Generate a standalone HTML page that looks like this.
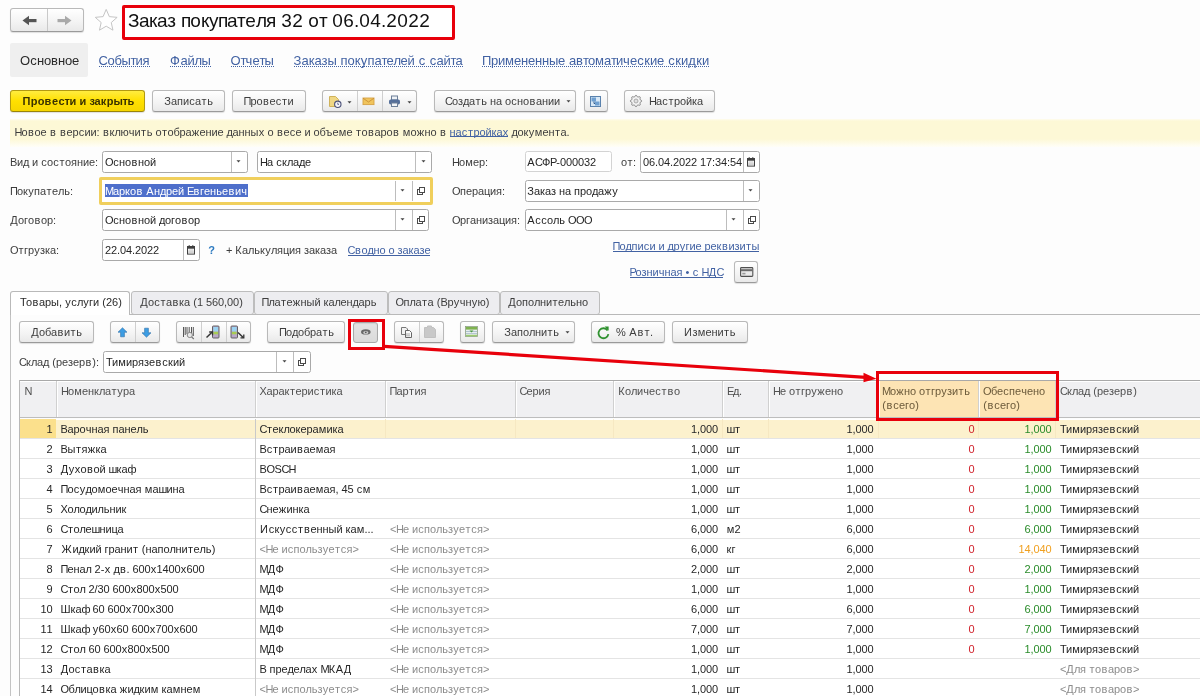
<!DOCTYPE html><html><head><meta charset="utf-8"><style>
*{margin:0;padding:0;box-sizing:border-box}
html,body{width:1200px;height:696px;overflow:hidden;background:#fdfdfd;font-family:'Liberation Sans',sans-serif}
.t{position:absolute;white-space:nowrap;line-height:1;font-kerning:none}
.t i{font-style:normal;display:inline-block;text-align:center}
.btn{position:absolute;border:1px solid #b9b9b9;border-bottom-color:#9a9a9a;border-radius:3px;background:linear-gradient(#ffffff,#f3f3f3 60%,#e9e9e9);box-shadow:0 1px 1px rgba(0,0,0,.12)}
.fld{position:absolute;border:1px solid #a9a9a9;border-radius:2.5px;background:#fff}
.vl{position:absolute;width:1px;background:#b5b5b5}
.hl{position:absolute;height:1px}
a{color:inherit}
#w{position:absolute;left:0;top:0;width:1200px;height:696px;will-change:transform}
</style></head><body><div id="w"><div class="btn" style="left:10px;top:8px;width:74px;height:24px;"></div>
<div class="vl" style="left:47px;top:9px;height:22px;background:#c9c9c9"></div>
<svg style="position:absolute;left:20px;top:14px;" width="20" height="14" viewBox="0 0 20 14"><path d="M2.5 6.5 L9 1.8 V11.2 Z" fill="#555"/><rect x="8" y="5" width="8.5" height="3.2" fill="#555"/></svg>
<svg style="position:absolute;left:56px;top:14px;" width="20" height="14" viewBox="0 0 20 14"><path d="M15.5 6.5 L9 1.8 V11.2 Z" fill="#a9a9a9"/><rect x="1.5" y="5" width="8.5" height="3.2" fill="#a9a9a9"/></svg>
<svg style="position:absolute;left:94px;top:8px;" width="25" height="25" viewBox="0 0 25 25"><polygon points="12.20,1.40 15.32,8.61 23.14,9.35 17.24,14.54 18.96,22.20 12.20,18.20 5.44,22.20 7.16,14.54 1.26,9.35 9.08,8.61" fill="#fff" stroke="#c4c4c4" stroke-width="1"/></svg>
<div class="" style="left:122px;top:5px;width:333px;height:35px;position:absolute;border:3px solid #e8000b;border-radius:2px;background:#fff"></div>
<div class="t" style="left:128px;top:11px;font-size:19px;color:#111;"><i style="width:11px">З</i><i style="width:10px">а</i><i style="width:8px">к</i><i style="width:10px">а</i><i style="width:9px">з</i><i style="width:5px">&nbsp;</i><i style="width:9px">п</i><i style="width:11px">о</i><i style="width:8px">к</i><i style="width:9px">у</i><i style="width:9px">п</i><i style="width:10px">а</i><i style="width:8px">т</i><i style="width:11px">е</i><i style="width:10px">л</i><i style="width:10px">я</i><i style="width:5px">&nbsp;</i><i style="width:11px">3</i><i style="width:11px">2</i><i style="width:5px">&nbsp;</i><i style="width:11px">о</i><i style="width:8px">т</i><i style="width:5px">&nbsp;</i><i style="width:11px">0</i><i style="width:11px">6</i><i style="width:5px">.</i><i style="width:11px">0</i><i style="width:11px">4</i><i style="width:5px">.</i><i style="width:11px">2</i><i style="width:11px">0</i><i style="width:11px">2</i><i style="width:11px">2</i></div>
<div class="" style="left:10px;top:43px;width:78px;height:34px;position:absolute;background:#efefef;border-radius:2px"></div>
<div class="t" style="left:20px;top:54px;font-size:13px;color:#2a2a2a;"><i style="width:10px">О</i><i style="width:7px">с</i><i style="width:7px">н</i><i style="width:7px">о</i><i style="width:7px">в</i><i style="width:7px">н</i><i style="width:7px">о</i><i style="width:7px">е</i></div>
<div class="t" style="left:98.5px;top:54px;font-size:13px;color:#4262a3;"><i style="width:9px">С</i><i style="width:7px">о</i><i style="width:7px">б</i><i style="width:9px">ы</i><i style="width:5px">т</i><i style="width:7px">и</i><i style="width:7px">я</i></div>
<div class="hl" style="left:98.5px;top:66px;width:51px;border-top:1px dotted #4262a3"></div>
<div class="t" style="left:169.5px;top:54px;font-size:13px;color:#4262a3;"><i style="width:11px">Ф</i><i style="width:7px">а</i><i style="width:7px">й</i><i style="width:7px">л</i><i style="width:9px">ы</i></div>
<div class="hl" style="left:169.5px;top:66px;width:41px;border-top:1px dotted #4262a3"></div>
<div class="t" style="left:230.5px;top:54px;font-size:13px;color:#4262a3;"><i style="width:10px">О</i><i style="width:5px">т</i><i style="width:7px">ч</i><i style="width:7px">е</i><i style="width:5px">т</i><i style="width:9px">ы</i></div>
<div class="hl" style="left:230.5px;top:66px;width:43px;border-top:1px dotted #4262a3"></div>
<div class="t" style="left:293.5px;top:54px;font-size:13px;color:#4262a3;"><i style="width:8px">З</i><i style="width:7px">а</i><i style="width:6px">к</i><i style="width:7px">а</i><i style="width:6px">з</i><i style="width:9px">ы</i><i style="width:4px">&nbsp;</i><i style="width:7px">п</i><i style="width:7px">о</i><i style="width:6px">к</i><i style="width:7px">у</i><i style="width:7px">п</i><i style="width:7px">а</i><i style="width:5px">т</i><i style="width:7px">е</i><i style="width:7px">л</i><i style="width:7px">е</i><i style="width:7px">й</i><i style="width:4px">&nbsp;</i><i style="width:7px">с</i><i style="width:4px">&nbsp;</i><i style="width:7px">с</i><i style="width:7px">а</i><i style="width:7px">й</i><i style="width:5px">т</i><i style="width:7px">а</i></div>
<div class="hl" style="left:293.5px;top:66px;width:169px;border-top:1px dotted #4262a3"></div>
<div class="t" style="left:482px;top:54px;font-size:13px;color:#4262a3;"><i style="width:9px">П</i><i style="width:7px">р</i><i style="width:7px">и</i><i style="width:9px">м</i><i style="width:7px">е</i><i style="width:7px">н</i><i style="width:7px">е</i><i style="width:7px">н</i><i style="width:7px">н</i><i style="width:9px">ы</i><i style="width:7px">е</i><i style="width:4px">&nbsp;</i><i style="width:7px">а</i><i style="width:7px">в</i><i style="width:5px">т</i><i style="width:7px">о</i><i style="width:9px">м</i><i style="width:7px">а</i><i style="width:5px">т</i><i style="width:7px">и</i><i style="width:7px">ч</i><i style="width:7px">е</i><i style="width:7px">с</i><i style="width:6px">к</i><i style="width:7px">и</i><i style="width:7px">е</i><i style="width:4px">&nbsp;</i><i style="width:7px">с</i><i style="width:6px">к</i><i style="width:7px">и</i><i style="width:8px">д</i><i style="width:6px">к</i><i style="width:7px">и</i></div>
<div class="hl" style="left:482px;top:66px;width:227px;border-top:1px dotted #4262a3"></div>
<div class="btn" style="left:10px;top:90px;width:135px;height:22px;background:linear-gradient(#ffec40,#ffe000 50%,#f6d600);border-color:#b39a10;border-bottom-color:#9a8408"></div>
<div class="t" style="left:22.5px;top:96px;font-size:11px;color:#3a3200;font-weight:bold"><i style="width:8px">П</i><i style="width:7px">р</i><i style="width:7px">о</i><i style="width:7px">в</i><i style="width:7px">е</i><i style="width:6px">с</i><i style="width:5px">т</i><i style="width:7px">и</i><i style="width:3px">&nbsp;</i><i style="width:7px">и</i><i style="width:3px">&nbsp;</i><i style="width:5px">з</i><i style="width:6px">а</i><i style="width:6px">к</i><i style="width:7px">р</i><i style="width:9px">ы</i><i style="width:5px">т</i><i style="width:6px">ь</i></div>
<div class="btn" style="left:152px;top:90px;width:73px;height:22px;"></div>
<div class="t" style="left:164px;top:96px;font-size:11px;color:#3d3d3d;"><i style="width:7px">З</i><i style="width:6px">а</i><i style="width:6px">п</i><i style="width:6px">и</i><i style="width:6px">с</i><i style="width:6px">а</i><i style="width:6px">т</i><i style="width:6px">ь</i></div>
<div class="btn" style="left:232px;top:90px;width:74px;height:22px;"></div>
<div class="t" style="left:243.5px;top:96px;font-size:11px;color:#3d3d3d;"><i style="width:7px">П</i><i style="width:6px">р</i><i style="width:6px">о</i><i style="width:7px">в</i><i style="width:6px">е</i><i style="width:6px">с</i><i style="width:6px">т</i><i style="width:6px">и</i></div>
<div class="btn" style="left:322px;top:90px;width:95px;height:22px;"></div>
<div class="vl" style="left:357px;top:91px;height:20px;background:#cfcfcf"></div>
<div class="vl" style="left:382px;top:91px;height:20px;background:#cfcfcf"></div>
<svg style="position:absolute;left:328px;top:95px;" width="14" height="14" viewBox="0 0 14 14"><path d="M1.5 1.5 H7.5 L10.5 4.5 V11.5 H1.5 Z" fill="#f0d784" stroke="#cfb25a"/><circle cx="9.8" cy="9.3" r="3.2" fill="#f4f4f8" stroke="#4a5078" stroke-width="1.1"/><path d="M9.8 7.6 V9.4 H11" stroke="#4a5078" stroke-width="0.8" fill="none"/></svg>
<svg style="position:absolute;left:346.5px;top:100.5px;" width="5" height="3" viewBox="0 0 5 3"><path d="M0.5 0.2 L4.5 0.2 L2.5 2.6 Z" fill="#444"/></svg>
<svg style="position:absolute;left:362px;top:97px;" width="13" height="9" viewBox="0 0 13 9"><rect x="1" y="1" width="11" height="6.6" fill="#f0c45c" stroke="#d6a245" stroke-width="0.9"/><path d="M1 1.2 L6.5 5 L12 1.2" fill="none" stroke="#c99035" stroke-width="0.9"/></svg>
<svg style="position:absolute;left:388px;top:95px;" width="13" height="13" viewBox="0 0 13 13"><rect x="3.5" y="1" width="6" height="4" fill="#eef2f6" stroke="#6d7f98"/><rect x="1" y="4.5" width="11" height="5" rx="1.8" fill="#56709a"/><rect x="3.5" y="8" width="6" height="3.5" fill="#f4f6f8" stroke="#6d7f98"/></svg>
<svg style="position:absolute;left:406.5px;top:100.5px;" width="5" height="3" viewBox="0 0 5 3"><path d="M0.5 0.2 L4.5 0.2 L2.5 2.6 Z" fill="#444"/></svg>
<div class="btn" style="left:434px;top:90px;width:142px;height:22px;"></div>
<div class="t" style="left:445px;top:96px;font-size:11px;color:#3d3d3d;"><i style="width:7px">С</i><i style="width:6px">о</i><i style="width:5px">з</i><i style="width:6px">д</i><i style="width:6px">а</i><i style="width:6px">т</i><i style="width:6px">ь</i><i style="width:3px">&nbsp;</i><i style="width:6px">н</i><i style="width:6px">а</i><i style="width:3px">&nbsp;</i><i style="width:6px">о</i><i style="width:6px">с</i><i style="width:6px">н</i><i style="width:6px">о</i><i style="width:7px">в</i><i style="width:6px">а</i><i style="width:6px">н</i><i style="width:6px">и</i><i style="width:6px">и</i></div>
<svg style="position:absolute;left:565.5px;top:99.5px;" width="5" height="3" viewBox="0 0 5 3"><path d="M0.5 0.2 L4.5 0.2 L2.5 2.6 Z" fill="#444"/></svg>
<div class="btn" style="left:584px;top:90px;width:24px;height:22px;"></div>
<svg style="position:absolute;left:589px;top:95px;" width="13" height="13" viewBox="0 0 13 13"><rect x="1.5" y="1.5" width="10" height="10" fill="#d8e8f6" stroke="#5a82ad"/><rect x="2.5" y="2.5" width="4.5" height="4" fill="#6f9fd0"/><rect x="6" y="6.5" width="4.5" height="4" fill="#6f9fd0"/><path d="M5 6.5 V8.5 H6" stroke="#2f5a8a" fill="none"/></svg>
<div class="btn" style="left:624px;top:90px;width:91px;height:22px;"></div>
<svg style="position:absolute;left:629px;top:94px;" width="14" height="14" viewBox="0 0 14 14"><polygon points="12.75,7.00 12.55,7.49 12.05,7.89 11.47,8.20 11.04,8.47 10.89,8.82 11.01,9.31 11.20,9.94 11.27,10.58 11.07,11.07 10.58,11.27 9.94,11.20 9.31,11.01 8.82,10.89 8.47,11.04 8.20,11.47 7.89,12.05 7.49,12.55 7.00,12.75 6.51,12.55 6.11,12.05 5.80,11.47 5.53,11.04 5.18,10.89 4.69,11.01 4.06,11.20 3.42,11.27 2.93,11.07 2.73,10.58 2.80,9.94 2.99,9.31 3.11,8.82 2.96,8.47 2.53,8.20 1.95,7.89 1.45,7.49 1.25,7.00 1.45,6.51 1.95,6.11 2.53,5.80 2.96,5.53 3.11,5.18 2.99,4.69 2.80,4.06 2.73,3.42 2.93,2.93 3.42,2.73 4.06,2.80 4.69,2.99 5.18,3.11 5.53,2.96 5.80,2.53 6.11,1.95 6.51,1.45 7.00,1.25 7.49,1.45 7.89,1.95 8.20,2.53 8.47,2.96 8.82,3.11 9.31,2.99 9.94,2.80 10.58,2.73 11.07,2.93 11.27,3.42 11.20,4.06 11.01,4.69 10.89,5.18 11.04,5.53 11.47,5.80 12.05,6.11 12.55,6.51 12.75,7.00" fill="#f3f3f3" stroke="#7a7a7a" stroke-width="0.9"/><circle cx="7" cy="7" r="2" fill="#e0e0e0" stroke="#9a9a9a" stroke-width="0.8"/></svg>
<div class="t" style="left:649px;top:96px;font-size:11px;color:#3d3d3d;"><i style="width:7px">Н</i><i style="width:6px">а</i><i style="width:6px">с</i><i style="width:6px">т</i><i style="width:6px">р</i><i style="width:6px">о</i><i style="width:6px">й</i><i style="width:5px">к</i><i style="width:6px">а</i></div>
<div class="" style="left:10px;top:119px;width:1190px;height:28px;position:absolute;background:linear-gradient(#fefcef 0px,#fdf8d6 2px,#fdf8d6 20px,#fffef8 28px)"></div>
<div class="t" style="left:14.5px;top:127px;font-size:11px;color:#3d3d3d;"><i style="width:7px">Н</i><i style="width:6px">о</i><i style="width:7px">в</i><i style="width:6px">о</i><i style="width:6px">е</i><i style="width:3px">&nbsp;</i><i style="width:7px">в</i><i style="width:3px">&nbsp;</i><i style="width:7px">в</i><i style="width:6px">е</i><i style="width:6px">р</i><i style="width:6px">с</i><i style="width:6px">и</i><i style="width:6px">и</i><i style="width:3px">:</i><i style="width:3px">&nbsp;</i><i style="width:7px">в</i><i style="width:5px">к</i><i style="width:6px">л</i><i style="width:8px">ю</i><i style="width:6px">ч</i><i style="width:6px">и</i><i style="width:6px">т</i><i style="width:6px">ь</i><i style="width:3px">&nbsp;</i><i style="width:6px">о</i><i style="width:6px">т</i><i style="width:6px">о</i><i style="width:6px">б</i><i style="width:6px">р</i><i style="width:6px">а</i><i style="width:8px">ж</i><i style="width:6px">е</i><i style="width:6px">н</i><i style="width:6px">и</i><i style="width:6px">е</i><i style="width:3px">&nbsp;</i><i style="width:6px">д</i><i style="width:6px">а</i><i style="width:6px">н</i><i style="width:6px">н</i><i style="width:8px">ы</i><i style="width:6px">х</i><i style="width:3px">&nbsp;</i><i style="width:6px">о</i><i style="width:3px">&nbsp;</i><i style="width:7px">в</i><i style="width:6px">е</i><i style="width:6px">с</i><i style="width:6px">е</i><i style="width:3px">&nbsp;</i><i style="width:6px">и</i><i style="width:3px">&nbsp;</i><i style="width:6px">о</i><i style="width:6px">б</i><i style="width:7px">ъ</i><i style="width:6px">е</i><i style="width:8px">м</i><i style="width:6px">е</i><i style="width:3px">&nbsp;</i><i style="width:6px">т</i><i style="width:6px">о</i><i style="width:7px">в</i><i style="width:6px">а</i><i style="width:6px">р</i><i style="width:6px">о</i><i style="width:7px">в</i><i style="width:3px">&nbsp;</i><i style="width:8px">м</i><i style="width:6px">о</i><i style="width:8px">ж</i><i style="width:6px">н</i><i style="width:6px">о</i><i style="width:3px">&nbsp;</i><i style="width:7px">в</i><i style="width:3px">&nbsp;</i></div>
<div class="t" style="left:449.5px;top:127px;font-size:11px;color:#4262a3;"><i style="width:6px">н</i><i style="width:6px">а</i><i style="width:6px">с</i><i style="width:6px">т</i><i style="width:6px">р</i><i style="width:6px">о</i><i style="width:6px">й</i><i style="width:5px">к</i><i style="width:6px">а</i><i style="width:6px">х</i></div>
<div class="hl" style="left:449.5px;top:136px;width:58px;background:#4262a3"></div>
<div class="t" style="left:508.5px;top:127px;font-size:11px;color:#3d3d3d;"><i style="width:3px">&nbsp;</i><i style="width:6px">д</i><i style="width:6px">о</i><i style="width:5px">к</i><i style="width:6px">у</i><i style="width:8px">м</i><i style="width:6px">е</i><i style="width:6px">н</i><i style="width:6px">т</i><i style="width:6px">а</i><i style="width:3px">.</i></div>
<div class="t" style="left:10px;top:157px;font-size:11px;color:#3d3d3d;"><i style="width:7px">В</i><i style="width:6px">и</i><i style="width:6px">д</i><i style="width:3px">&nbsp;</i><i style="width:6px">и</i><i style="width:3px">&nbsp;</i><i style="width:6px">с</i><i style="width:6px">о</i><i style="width:6px">с</i><i style="width:6px">т</i><i style="width:6px">о</i><i style="width:6px">я</i><i style="width:6px">н</i><i style="width:6px">и</i><i style="width:6px">е</i><i style="width:3px">:</i></div>
<div class="fld" style="left:102px;top:151px;width:146px;height:22px;"></div>
<div class="vl" style="left:231px;top:152px;height:20px;background:#bdbdbd"></div>
<div class="t" style="left:105px;top:157px;font-size:11px;color:#262626;"><i style="width:8px">О</i><i style="width:6px">с</i><i style="width:6px">н</i><i style="width:6px">о</i><i style="width:7px">в</i><i style="width:6px">н</i><i style="width:6px">о</i><i style="width:6px">й</i></div>
<svg style="position:absolute;left:236.0px;top:160.3px;" width="5" height="3" viewBox="0 0 5 3"><path d="M0.5 0.2 L4.5 0.2 L2.5 2.6 Z" fill="#444"/></svg>
<div class="fld" style="left:257px;top:151px;width:175px;height:22px;"></div>
<div class="vl" style="left:415px;top:152px;height:20px;background:#bdbdbd"></div>
<div class="t" style="left:260px;top:157px;font-size:11px;color:#262626;"><i style="width:7px">Н</i><i style="width:6px">а</i><i style="width:3px">&nbsp;</i><i style="width:6px">с</i><i style="width:5px">к</i><i style="width:6px">л</i><i style="width:6px">а</i><i style="width:6px">д</i><i style="width:6px">е</i></div>
<svg style="position:absolute;left:420.5px;top:160.3px;" width="5" height="3" viewBox="0 0 5 3"><path d="M0.5 0.2 L4.5 0.2 L2.5 2.6 Z" fill="#444"/></svg>
<div class="t" style="left:452px;top:157px;font-size:11px;color:#3d3d3d;"><i style="width:7px">Н</i><i style="width:6px">о</i><i style="width:8px">м</i><i style="width:6px">е</i><i style="width:6px">р</i><i style="width:3px">:</i></div>
<div class="fld" style="left:525px;top:151px;width:87px;height:21px;border-color:#d3d3d3"></div>
<div class="t" style="left:527px;top:157px;font-size:11px;color:#262626;"><i style="width:8px">А</i><i style="width:7px">С</i><i style="width:8px">Ф</i><i style="width:6px">Р</i><i style="width:4px">-</i><i style="width:6px">0</i><i style="width:6px">0</i><i style="width:6px">0</i><i style="width:6px">0</i><i style="width:6px">3</i><i style="width:6px">2</i></div>
<div class="t" style="left:621px;top:157px;font-size:11px;color:#3d3d3d;"><i style="width:6px">о</i><i style="width:6px">т</i><i style="width:3px">:</i></div>
<div class="fld" style="left:640px;top:151px;width:120px;height:22px;"></div>
<div class="vl" style="left:743px;top:152px;height:20px;background:#bdbdbd"></div>
<div class="t" style="left:643px;top:157px;font-size:11px;color:#262626;"><i style="width:6px">0</i><i style="width:6px">6</i><i style="width:3px">.</i><i style="width:6px">0</i><i style="width:6px">4</i><i style="width:3px">.</i><i style="width:6px">2</i><i style="width:6px">0</i><i style="width:6px">2</i><i style="width:6px">2</i><i style="width:3px">&nbsp;</i><i style="width:6px">1</i><i style="width:6px">7</i><i style="width:3px">:</i><i style="width:6px">3</i><i style="width:6px">4</i><i style="width:3px">:</i><i style="width:6px">5</i><i style="width:6px">4</i></div>
<svg style="position:absolute;left:746.1px;top:156.8px;" width="10" height="10" viewBox="0 0 10 10"><rect x="1.5" y="1.5" width="7" height="7.6" fill="#f2f2f2" stroke="#404040"/><rect x="1.5" y="1.5" width="7" height="2.2" fill="#404040"/><rect x="2.6" y="0.3" width="1.3" height="2" fill="#404040"/><rect x="6.1" y="0.3" width="1.3" height="2" fill="#404040"/><path d="M2 6.2h6M2 7.6h6M4 4v4.6M6 4v4.6" stroke="#c8c8c8" stroke-width="0.7"/></svg>
<div class="t" style="left:10px;top:186px;font-size:11px;color:#3d3d3d;"><i style="width:7px">П</i><i style="width:6px">о</i><i style="width:5px">к</i><i style="width:6px">у</i><i style="width:6px">п</i><i style="width:6px">а</i><i style="width:6px">т</i><i style="width:6px">е</i><i style="width:6px">л</i><i style="width:6px">ь</i><i style="width:3px">:</i></div>
<div class="" style="left:99px;top:177px;width:334px;height:28px;position:absolute;border:3px solid #f0cf5c;border-radius:2px;background:#fff"></div>
<div class="vl" style="left:395px;top:181px;height:20px;background:#bdbdbd"></div>
<div class="vl" style="left:412px;top:181px;height:20px;background:#bdbdbd"></div>
<svg style="position:absolute;left:400.1px;top:189.3px;" width="5" height="3" viewBox="0 0 5 3"><path d="M0.5 0.2 L4.5 0.2 L2.5 2.6 Z" fill="#444"/></svg>
<svg style="position:absolute;left:416px;top:186px;shape-rendering:crispEdges" width="10" height="10" viewBox="0 0 10 10"><path d="M3.5 1.5 H8.5 V6.5 H3.5 Z" fill="none" stroke="#4a4a4a" stroke-width="1"/><path d="M3.5 3.5 H1.5 V8.5 H6.5 V6.5" fill="none" stroke="#4a4a4a" stroke-width="1"/></svg>
<div class="" style="left:105px;top:184px;width:143px;height:13px;position:absolute;background:#4e6fcb"></div>
<div class="t" style="left:105px;top:186px;font-size:11px;color:#fff;"><i style="width:8px">М</i><i style="width:6px">а</i><i style="width:6px">р</i><i style="width:5px">к</i><i style="width:6px">о</i><i style="width:7px">в</i><i style="width:3px">&nbsp;</i><i style="width:8px">А</i><i style="width:6px">н</i><i style="width:6px">д</i><i style="width:6px">р</i><i style="width:6px">е</i><i style="width:6px">й</i><i style="width:3px">&nbsp;</i><i style="width:6px">Е</i><i style="width:7px">в</i><i style="width:4px">г</i><i style="width:6px">е</i><i style="width:6px">н</i><i style="width:6px">ь</i><i style="width:6px">е</i><i style="width:7px">в</i><i style="width:6px">и</i><i style="width:6px">ч</i></div>
<div class="t" style="left:452px;top:186px;font-size:11px;color:#3d3d3d;"><i style="width:8px">О</i><i style="width:6px">п</i><i style="width:6px">е</i><i style="width:6px">р</i><i style="width:6px">а</i><i style="width:6px">ц</i><i style="width:6px">и</i><i style="width:6px">я</i><i style="width:3px">:</i></div>
<div class="fld" style="left:525px;top:180px;width:235px;height:22px;"></div>
<div class="vl" style="left:743px;top:181px;height:20px;background:#bdbdbd"></div>
<div class="t" style="left:527px;top:186px;font-size:11px;color:#262626;"><i style="width:7px">З</i><i style="width:6px">а</i><i style="width:5px">к</i><i style="width:6px">а</i><i style="width:5px">з</i><i style="width:3px">&nbsp;</i><i style="width:6px">н</i><i style="width:6px">а</i><i style="width:3px">&nbsp;</i><i style="width:6px">п</i><i style="width:6px">р</i><i style="width:6px">о</i><i style="width:6px">д</i><i style="width:6px">а</i><i style="width:8px">ж</i><i style="width:6px">у</i></div>
<svg style="position:absolute;left:748.0px;top:189.3px;" width="5" height="3" viewBox="0 0 5 3"><path d="M0.5 0.2 L4.5 0.2 L2.5 2.6 Z" fill="#444"/></svg>
<div class="t" style="left:10px;top:215px;font-size:11px;color:#3d3d3d;"><i style="width:8px">Д</i><i style="width:6px">о</i><i style="width:4px">г</i><i style="width:6px">о</i><i style="width:7px">в</i><i style="width:6px">о</i><i style="width:6px">р</i><i style="width:3px">:</i></div>
<div class="fld" style="left:102px;top:209px;width:327px;height:22px;"></div>
<div class="vl" style="left:395px;top:210px;height:20px;background:#bdbdbd"></div>
<div class="vl" style="left:412px;top:210px;height:20px;background:#bdbdbd"></div>
<div class="t" style="left:105px;top:215px;font-size:11px;color:#262626;"><i style="width:8px">О</i><i style="width:6px">с</i><i style="width:6px">н</i><i style="width:6px">о</i><i style="width:7px">в</i><i style="width:6px">н</i><i style="width:6px">о</i><i style="width:6px">й</i><i style="width:3px">&nbsp;</i><i style="width:6px">д</i><i style="width:6px">о</i><i style="width:4px">г</i><i style="width:6px">о</i><i style="width:7px">в</i><i style="width:6px">о</i><i style="width:6px">р</i></div>
<svg style="position:absolute;left:400.0px;top:218.3px;" width="5" height="3" viewBox="0 0 5 3"><path d="M0.5 0.2 L4.5 0.2 L2.5 2.6 Z" fill="#444"/></svg>
<svg style="position:absolute;left:416px;top:215.0px;shape-rendering:crispEdges" width="10" height="10" viewBox="0 0 10 10"><path d="M3.5 1.5 H8.5 V6.5 H3.5 Z" fill="none" stroke="#4a4a4a" stroke-width="1"/><path d="M3.5 3.5 H1.5 V8.5 H6.5 V6.5" fill="none" stroke="#4a4a4a" stroke-width="1"/></svg>
<div class="t" style="left:452px;top:215px;font-size:11px;color:#3d3d3d;"><i style="width:8px">О</i><i style="width:6px">р</i><i style="width:4px">г</i><i style="width:6px">а</i><i style="width:6px">н</i><i style="width:6px">и</i><i style="width:5px">з</i><i style="width:6px">а</i><i style="width:6px">ц</i><i style="width:6px">и</i><i style="width:6px">я</i><i style="width:3px">:</i></div>
<div class="fld" style="left:525px;top:209px;width:235px;height:22px;"></div>
<div class="vl" style="left:726px;top:210px;height:20px;background:#bdbdbd"></div>
<div class="vl" style="left:743px;top:210px;height:20px;background:#bdbdbd"></div>
<div class="t" style="left:527px;top:215px;font-size:11px;color:#262626;"><i style="width:8px">А</i><i style="width:6px">с</i><i style="width:6px">с</i><i style="width:6px">о</i><i style="width:6px">л</i><i style="width:6px">ь</i><i style="width:3px">&nbsp;</i><i style="width:8px">О</i><i style="width:8px">О</i><i style="width:8px">О</i></div>
<svg style="position:absolute;left:731.0px;top:218.3px;" width="5" height="3" viewBox="0 0 5 3"><path d="M0.5 0.2 L4.5 0.2 L2.5 2.6 Z" fill="#444"/></svg>
<svg style="position:absolute;left:746.5px;top:215.0px;shape-rendering:crispEdges" width="10" height="10" viewBox="0 0 10 10"><path d="M3.5 1.5 H8.5 V6.5 H3.5 Z" fill="none" stroke="#4a4a4a" stroke-width="1"/><path d="M3.5 3.5 H1.5 V8.5 H6.5 V6.5" fill="none" stroke="#4a4a4a" stroke-width="1"/></svg>
<div class="t" style="left:10px;top:245px;font-size:11px;color:#3d3d3d;"><i style="width:8px">О</i><i style="width:6px">т</i><i style="width:4px">г</i><i style="width:6px">р</i><i style="width:6px">у</i><i style="width:5px">з</i><i style="width:5px">к</i><i style="width:6px">а</i><i style="width:3px">:</i></div>
<div class="fld" style="left:102px;top:239px;width:98px;height:22px;"></div>
<div class="vl" style="left:183px;top:240px;height:20px;background:#bdbdbd"></div>
<div class="t" style="left:105px;top:245px;font-size:11px;color:#262626;"><i style="width:6px">2</i><i style="width:6px">2</i><i style="width:3px">.</i><i style="width:6px">0</i><i style="width:6px">4</i><i style="width:3px">.</i><i style="width:6px">2</i><i style="width:6px">0</i><i style="width:6px">2</i><i style="width:6px">2</i></div>
<svg style="position:absolute;left:186.1px;top:244.8px;" width="10" height="10" viewBox="0 0 10 10"><rect x="1.5" y="1.5" width="7" height="7.6" fill="#f2f2f2" stroke="#404040"/><rect x="1.5" y="1.5" width="7" height="2.2" fill="#404040"/><rect x="2.6" y="0.3" width="1.3" height="2" fill="#404040"/><rect x="6.1" y="0.3" width="1.3" height="2" fill="#404040"/><path d="M2 6.2h6M2 7.6h6M4 4v4.6M6 4v4.6" stroke="#c8c8c8" stroke-width="0.7"/></svg>
<div class="t" style="left:208px;top:245px;font-size:11px;color:#2c7ac0;font-weight:bold"><i style="width:7px">?</i></div>
<div class="t" style="left:226px;top:245px;font-size:11px;color:#3d3d3d;"><i style="width:6px">+</i><i style="width:3px">&nbsp;</i><i style="width:7px">К</i><i style="width:6px">а</i><i style="width:6px">л</i><i style="width:6px">ь</i><i style="width:5px">к</i><i style="width:6px">у</i><i style="width:6px">л</i><i style="width:6px">я</i><i style="width:6px">ц</i><i style="width:6px">и</i><i style="width:6px">я</i><i style="width:3px">&nbsp;</i><i style="width:5px">з</i><i style="width:6px">а</i><i style="width:5px">к</i><i style="width:6px">а</i><i style="width:5px">з</i><i style="width:6px">а</i></div>
<div class="t" style="left:347.5px;top:245px;font-size:11px;color:#4262a3;"><i style="width:7px">С</i><i style="width:7px">в</i><i style="width:6px">о</i><i style="width:6px">д</i><i style="width:6px">н</i><i style="width:6px">о</i><i style="width:3px">&nbsp;</i><i style="width:6px">о</i><i style="width:3px">&nbsp;</i><i style="width:5px">з</i><i style="width:6px">а</i><i style="width:5px">к</i><i style="width:6px">а</i><i style="width:5px">з</i><i style="width:6px">е</i></div>
<div class="hl" style="left:347.5px;top:255px;width:82px;background:#4262a3"></div>
<div class="t" style="left:612.5px;top:241px;font-size:11px;color:#4262a3;"><i style="width:7px">П</i><i style="width:6px">о</i><i style="width:6px">д</i><i style="width:6px">п</i><i style="width:6px">и</i><i style="width:6px">с</i><i style="width:6px">и</i><i style="width:3px">&nbsp;</i><i style="width:6px">и</i><i style="width:3px">&nbsp;</i><i style="width:6px">д</i><i style="width:6px">р</i><i style="width:6px">у</i><i style="width:4px">г</i><i style="width:6px">и</i><i style="width:6px">е</i><i style="width:3px">&nbsp;</i><i style="width:6px">р</i><i style="width:6px">е</i><i style="width:5px">к</i><i style="width:7px">в</i><i style="width:6px">и</i><i style="width:5px">з</i><i style="width:6px">и</i><i style="width:6px">т</i><i style="width:8px">ы</i></div>
<div class="hl" style="left:612.5px;top:251px;width:146px;background:#4262a3"></div>
<div class="t" style="left:629.5px;top:267px;font-size:11px;color:#4262a3;"><i style="width:6px">Р</i><i style="width:6px">о</i><i style="width:5px">з</i><i style="width:6px">н</i><i style="width:6px">и</i><i style="width:6px">ч</i><i style="width:6px">н</i><i style="width:6px">а</i><i style="width:6px">я</i><i style="width:3px">&nbsp;</i><i style="width:4px">•</i><i style="width:3px">&nbsp;</i><i style="width:6px">с</i><i style="width:3px">&nbsp;</i><i style="width:7px">Н</i><i style="width:8px">Д</i><i style="width:7px">С</i></div>
<div class="hl" style="left:629.5px;top:277px;width:93px;background:#4262a3"></div>
<div class="btn" style="left:734px;top:261px;width:24px;height:22px;"></div>
<svg style="position:absolute;left:740px;top:267px;" width="14" height="11" viewBox="0 0 14 11"><rect x="0.6" y="0.6" width="12.2" height="8.8" rx="0.8" fill="#eaeaea" stroke="#505050" stroke-width="1.1"/><rect x="1" y="2.2" width="11.4" height="2" fill="#6a6a6a"/><rect x="2.3" y="5.8" width="3.2" height="1.6" fill="#9a9a9a"/></svg>
<div class="" style="left:10px;top:291px;width:120px;height:24px;position:absolute;background:#fff;border:1px solid #b9b9b9;border-bottom:none;border-radius:3px 3px 0 0;z-index:2"></div>
<div class="" style="left:130.5px;top:291px;width:123.0px;height:24px;position:absolute;background:#ededf0;border:1px solid #bdbdbd;border-radius:3px 3px 3px 3px"></div>
<div class="" style="left:253.5px;top:291px;width:134.0px;height:24px;position:absolute;background:#ededf0;border:1px solid #bdbdbd;border-radius:3px 3px 3px 3px"></div>
<div class="" style="left:387.5px;top:291px;width:112.0px;height:24px;position:absolute;background:#ededf0;border:1px solid #bdbdbd;border-radius:3px 3px 3px 3px"></div>
<div class="" style="left:499.5px;top:291px;width:100.0px;height:24px;position:absolute;background:#ededf0;border:1px solid #bdbdbd;border-radius:3px 3px 3px 3px"></div>
<div class="hl" style="left:130px;top:314px;width:1070px;background:#b9b9b9"></div>
<div class="vl" style="left:10px;top:314px;height:382px;background:#c3c3c3"></div>
<div class="t" style="left:20px;top:297px;font-size:11px;color:#2a2a2a;z-index:3"><i style="width:6px">Т</i><i style="width:6px">о</i><i style="width:7px">в</i><i style="width:6px">а</i><i style="width:6px">р</i><i style="width:8px">ы</i><i style="width:3px">,</i><i style="width:3px">&nbsp;</i><i style="width:6px">у</i><i style="width:6px">с</i><i style="width:6px">л</i><i style="width:6px">у</i><i style="width:4px">г</i><i style="width:6px">и</i><i style="width:3px">&nbsp;</i><i style="width:4px">(</i><i style="width:6px">2</i><i style="width:6px">6</i><i style="width:4px">)</i></div>
<div class="t" style="left:140px;top:297px;font-size:11px;color:#3d3d3d;"><i style="width:8px">Д</i><i style="width:6px">о</i><i style="width:6px">с</i><i style="width:6px">т</i><i style="width:6px">а</i><i style="width:7px">в</i><i style="width:5px">к</i><i style="width:6px">а</i><i style="width:3px">&nbsp;</i><i style="width:4px">(</i><i style="width:6px">1</i><i style="width:3px">&nbsp;</i><i style="width:6px">5</i><i style="width:6px">6</i><i style="width:6px">0</i><i style="width:3px">,</i><i style="width:6px">0</i><i style="width:6px">0</i><i style="width:4px">)</i></div>
<div class="t" style="left:261.5px;top:297px;font-size:11px;color:#3d3d3d;"><i style="width:7px">П</i><i style="width:6px">л</i><i style="width:6px">а</i><i style="width:6px">т</i><i style="width:6px">е</i><i style="width:8px">ж</i><i style="width:6px">н</i><i style="width:8px">ы</i><i style="width:6px">й</i><i style="width:3px">&nbsp;</i><i style="width:5px">к</i><i style="width:6px">а</i><i style="width:6px">л</i><i style="width:6px">е</i><i style="width:6px">н</i><i style="width:6px">д</i><i style="width:6px">а</i><i style="width:6px">р</i><i style="width:6px">ь</i></div>
<div class="t" style="left:395.5px;top:297px;font-size:11px;color:#3d3d3d;"><i style="width:8px">О</i><i style="width:6px">п</i><i style="width:6px">л</i><i style="width:6px">а</i><i style="width:6px">т</i><i style="width:6px">а</i><i style="width:3px">&nbsp;</i><i style="width:4px">(</i><i style="width:7px">В</i><i style="width:6px">р</i><i style="width:6px">у</i><i style="width:6px">ч</i><i style="width:6px">н</i><i style="width:6px">у</i><i style="width:8px">ю</i><i style="width:4px">)</i></div>
<div class="t" style="left:508px;top:297px;font-size:11px;color:#3d3d3d;"><i style="width:8px">Д</i><i style="width:6px">о</i><i style="width:6px">п</i><i style="width:6px">о</i><i style="width:6px">л</i><i style="width:6px">н</i><i style="width:6px">и</i><i style="width:6px">т</i><i style="width:6px">е</i><i style="width:6px">л</i><i style="width:6px">ь</i><i style="width:6px">н</i><i style="width:6px">о</i></div>
<div class="btn" style="left:19px;top:321px;width:75px;height:22px;"></div>
<div class="t" style="left:31px;top:327px;font-size:11px;color:#3d3d3d;"><i style="width:8px">Д</i><i style="width:6px">о</i><i style="width:6px">б</i><i style="width:6px">а</i><i style="width:7px">в</i><i style="width:6px">и</i><i style="width:6px">т</i><i style="width:6px">ь</i></div>
<div class="btn" style="left:110px;top:321px;width:50px;height:22px;"></div>
<div class="vl" style="left:135px;top:322px;height:20px;background:#cfcfcf"></div>
<svg style="position:absolute;left:117px;top:327px;" width="11" height="11" viewBox="0 0 11 11"><path d="M5.5 0.8 L10 5.2 H7.4 V9.8 H3.6 V5.2 H1 Z" fill="#3d9de3" stroke="#2b6fa8" stroke-width="0.6"/></svg>
<svg style="position:absolute;left:141px;top:327px;" width="11" height="11" viewBox="0 0 11 11"><path d="M5.5 10.2 L10 5.8 H7.4 V1.2 H3.6 V5.8 H1 Z" fill="#3d9de3" stroke="#2b6fa8" stroke-width="0.6"/></svg>
<div class="btn" style="left:176px;top:321px;width:75px;height:22px;"></div>
<div class="vl" style="left:201px;top:322px;height:20px;background:#cfcfcf"></div>
<div class="vl" style="left:226px;top:322px;height:20px;background:#cfcfcf"></div>
<svg style="position:absolute;left:182px;top:326px;" width="14" height="14" viewBox="0 0 14 14"><path d="M1.5 1v10M3.2 1v8M5 1v7M7.2 1v6M9.5 1v6M11.3 1v9" stroke="#555" stroke-width="1"/><circle cx="7.8" cy="9" r="2.6" fill="#e8e8e8" stroke="#888"/><path d="M9.6 10.8 L11.8 13" stroke="#777" stroke-width="1.2"/></svg>
<svg style="position:absolute;left:205px;top:325px;" width="16" height="14" viewBox="0 0 16 14"><rect x="7.5" y="1" width="6.5" height="12" rx="0.8" fill="#b9a8c8" stroke="#555" stroke-width="0.9"/><rect x="8.4" y="2" width="4.7" height="4.5" fill="#9bd3f2"/><rect x="8.4" y="6.8" width="4.7" height="2.5" fill="#a8cc50"/><path d="M1.5 12.5 L7 7.3" stroke="#333" stroke-width="1.5"/><path d="M4.2 7 H7.5 V10.2" stroke="#333" stroke-width="1.3" fill="none"/></svg>
<svg style="position:absolute;left:230px;top:325px;" width="16" height="14" viewBox="0 0 16 14"><rect x="1" y="1" width="6.5" height="12" rx="0.8" fill="#b9a8c8" stroke="#555" stroke-width="0.9"/><rect x="1.9" y="2" width="4.7" height="4.5" fill="#9bd3f2"/><rect x="1.9" y="6.8" width="4.7" height="2.5" fill="#a8cc50"/><path d="M8 7.5 L13.5 12.7" stroke="#333" stroke-width="1.5"/><path d="M10.5 12.8 H13.8 V9.5" stroke="#333" stroke-width="1.3" fill="none"/></svg>
<div class="btn" style="left:267px;top:321px;width:78px;height:22px;"></div>
<div class="t" style="left:279px;top:327px;font-size:11px;color:#3d3d3d;"><i style="width:7px">П</i><i style="width:6px">о</i><i style="width:6px">д</i><i style="width:6px">о</i><i style="width:6px">б</i><i style="width:6px">р</i><i style="width:6px">а</i><i style="width:6px">т</i><i style="width:6px">ь</i></div>
<div class="btn" style="left:353px;top:322px;width:25px;height:21px;background:linear-gradient(#e4e4e4,#dadada);border-color:#a8a8a8;box-shadow:inset 0 1px 1px rgba(0,0,0,.08)"></div>
<svg style="position:absolute;left:360px;top:328px;" width="12" height="8" viewBox="0 0 12 8"><ellipse cx="5.8" cy="3.9" rx="4.8" ry="2.6" fill="#6a6a6a"/><ellipse cx="5.8" cy="4.4" rx="2.6" ry="1.5" fill="#cfcfcf"/><circle cx="5.8" cy="4.3" r="0.9" fill="#555"/></svg>
<div class="" style="left:348px;top:318.5px;width:37px;height:31.0px;position:absolute;border:3px solid #e8000b;z-index:5"></div>
<div class="btn" style="left:394px;top:321px;width:50px;height:22px;"></div>
<div class="vl" style="left:419px;top:322px;height:20px;background:#cfcfcf"></div>
<svg style="position:absolute;left:400px;top:326px;" width="13" height="13" viewBox="0 0 13 13"><path d="M1.5 1.5 H6 L7.5 3 V8.5 H1.5 Z" fill="#f2f2f2" stroke="#777"/><path d="M5.5 4.5 H9.5 L11.5 6.5 V11.5 H5.5 Z" fill="#fafafa" stroke="#666"/><path d="M6 8h4M6 9.8h4" stroke="#999" stroke-width="0.8"/></svg>
<svg style="position:absolute;left:424px;top:325px;" width="13" height="14" viewBox="0 0 13 14"><path d="M0.5 2.5 H3.5 V1 H7.5 V2.5 H9.5 L11.5 4.5 V12.5 H0.5 Z" fill="#c8c8c8" stroke="#c0c0c0"/></svg>
<div class="btn" style="left:460px;top:321px;width:25px;height:22px;"></div>
<svg style="position:absolute;left:465px;top:326px;" width="14" height="12" viewBox="0 0 14 12"><rect x="0.5" y="0.5" width="12" height="10" fill="#e8eef0" stroke="#8aa080" stroke-width="0.8"/><rect x="1" y="1" width="11" height="2.6" fill="#7eb24e"/><path d="M1 5.5h11M1 7.6h11" stroke="#a8bcc8" stroke-width="0.9"/><path d="M4.5 4.6 L6.5 6.6 L8.5 4.6Z" fill="#4a9a3a"/><rect x="1" y="8.8" width="11" height="1.4" fill="#9ccc70"/></svg>
<div class="btn" style="left:492px;top:321px;width:83px;height:22px;"></div>
<div class="t" style="left:504px;top:327px;font-size:11px;color:#3d3d3d;"><i style="width:7px">З</i><i style="width:6px">а</i><i style="width:6px">п</i><i style="width:6px">о</i><i style="width:6px">л</i><i style="width:6px">н</i><i style="width:6px">и</i><i style="width:6px">т</i><i style="width:6px">ь</i></div>
<svg style="position:absolute;left:564.5px;top:330.5px;" width="5" height="3" viewBox="0 0 5 3"><path d="M0.5 0.2 L4.5 0.2 L2.5 2.6 Z" fill="#444"/></svg>
<div class="btn" style="left:591px;top:321px;width:74px;height:22px;"></div>
<svg style="position:absolute;left:596px;top:325px;" width="15" height="15" viewBox="0 0 15 15"><path d="M11.6 5.4 A5 5 0 1 0 12.4 9.2" fill="none" stroke="#2f912f" stroke-width="1.8"/><path d="M8.6 1.6 L12.6 1.6 L12.6 5.8 Z" fill="#2f912f"/></svg>
<div class="t" style="left:616px;top:327px;font-size:11px;color:#3d3d3d;"><i style="width:10px">%</i><i style="width:3px">&nbsp;</i><i style="width:8px">А</i><i style="width:7px">в</i><i style="width:6px">т</i><i style="width:3px">.</i></div>
<div class="btn" style="left:672px;top:321px;width:76px;height:22px;"></div>
<div class="t" style="left:683.5px;top:327px;font-size:11px;color:#3d3d3d;"><i style="width:9px">И</i><i style="width:5px">з</i><i style="width:8px">м</i><i style="width:6px">е</i><i style="width:6px">н</i><i style="width:6px">и</i><i style="width:6px">т</i><i style="width:6px">ь</i></div>
<div class="t" style="left:19px;top:357px;font-size:11px;color:#3d3d3d;"><i style="width:7px">С</i><i style="width:5px">к</i><i style="width:6px">л</i><i style="width:6px">а</i><i style="width:6px">д</i><i style="width:3px">&nbsp;</i><i style="width:4px">(</i><i style="width:6px">р</i><i style="width:6px">е</i><i style="width:5px">з</i><i style="width:6px">е</i><i style="width:6px">р</i><i style="width:7px">в</i><i style="width:4px">)</i><i style="width:3px">:</i></div>
<div class="fld" style="left:103px;top:351px;width:208px;height:22px;"></div>
<div class="vl" style="left:276px;top:352px;height:20px;background:#bdbdbd"></div>
<div class="vl" style="left:293px;top:352px;height:20px;background:#bdbdbd"></div>
<div class="t" style="left:106px;top:357px;font-size:11px;color:#262626;"><i style="width:6px">Т</i><i style="width:6px">и</i><i style="width:8px">м</i><i style="width:6px">и</i><i style="width:6px">р</i><i style="width:6px">я</i><i style="width:5px">з</i><i style="width:6px">е</i><i style="width:7px">в</i><i style="width:6px">с</i><i style="width:5px">к</i><i style="width:6px">и</i><i style="width:6px">й</i></div>
<svg style="position:absolute;left:281.5px;top:360.3px;" width="5" height="3" viewBox="0 0 5 3"><path d="M0.5 0.2 L4.5 0.2 L2.5 2.6 Z" fill="#444"/></svg>
<svg style="position:absolute;left:297px;top:357.0px;shape-rendering:crispEdges" width="10" height="10" viewBox="0 0 10 10"><path d="M3.5 1.5 H8.5 V6.5 H3.5 Z" fill="none" stroke="#4a4a4a" stroke-width="1"/><path d="M3.5 3.5 H1.5 V8.5 H6.5 V6.5" fill="none" stroke="#4a4a4a" stroke-width="1"/></svg>
<div class="" style="left:19px;top:380px;width:1181px;height:38px;position:absolute;background:#f0f0f2;border-top:1px solid #a9a9a9;border-bottom:1px solid #bdbdbd;box-shadow:inset 0 1px #fff"></div>
<div class="vl" style="left:19px;top:380px;height:316px;background:#b8b8b8"></div>
<div class="" style="left:878px;top:381px;width:178px;height:36px;position:absolute;background:#fde4b4"></div>
<div class="vl" style="left:56px;top:381px;height:36px;background:#d0d0d0"></div>
<div class="vl" style="left:57px;top:381px;height:36px;background:#fff"></div>
<div class="vl" style="left:255px;top:381px;height:36px;background:#d0d0d0"></div>
<div class="vl" style="left:256px;top:381px;height:36px;background:#fff"></div>
<div class="vl" style="left:385px;top:381px;height:36px;background:#d0d0d0"></div>
<div class="vl" style="left:386px;top:381px;height:36px;background:#fff"></div>
<div class="vl" style="left:515px;top:381px;height:36px;background:#d0d0d0"></div>
<div class="vl" style="left:516px;top:381px;height:36px;background:#fff"></div>
<div class="vl" style="left:613px;top:381px;height:36px;background:#d0d0d0"></div>
<div class="vl" style="left:614px;top:381px;height:36px;background:#fff"></div>
<div class="vl" style="left:722px;top:381px;height:36px;background:#d0d0d0"></div>
<div class="vl" style="left:723px;top:381px;height:36px;background:#fff"></div>
<div class="vl" style="left:768px;top:381px;height:36px;background:#d0d0d0"></div>
<div class="vl" style="left:769px;top:381px;height:36px;background:#fff"></div>
<div class="vl" style="left:878px;top:381px;height:36px;background:#d0d0d0"></div>
<div class="vl" style="left:879px;top:381px;height:36px;background:#fff"></div>
<div class="vl" style="left:978px;top:381px;height:36px;background:#d0d0d0"></div>
<div class="vl" style="left:979px;top:381px;height:36px;background:#fff"></div>
<div class="vl" style="left:1055px;top:381px;height:36px;background:#d0d0d0"></div>
<div class="vl" style="left:1056px;top:381px;height:36px;background:#fff"></div>
<div class="t" style="left:24.5px;top:386px;font-size:11px;color:#505050;"><i style="width:7px">N</i></div>
<div class="t" style="left:61px;top:386px;font-size:11px;color:#505050;"><i style="width:7px">Н</i><i style="width:6px">о</i><i style="width:8px">м</i><i style="width:6px">е</i><i style="width:6px">н</i><i style="width:5px">к</i><i style="width:6px">л</i><i style="width:6px">а</i><i style="width:6px">т</i><i style="width:6px">у</i><i style="width:6px">р</i><i style="width:6px">а</i></div>
<div class="t" style="left:259.5px;top:386px;font-size:11px;color:#505050;"><i style="width:7px">Х</i><i style="width:6px">а</i><i style="width:6px">р</i><i style="width:6px">а</i><i style="width:5px">к</i><i style="width:6px">т</i><i style="width:6px">е</i><i style="width:6px">р</i><i style="width:6px">и</i><i style="width:6px">с</i><i style="width:6px">т</i><i style="width:6px">и</i><i style="width:5px">к</i><i style="width:6px">а</i></div>
<div class="t" style="left:389.5px;top:386px;font-size:11px;color:#505050;"><i style="width:7px">П</i><i style="width:6px">а</i><i style="width:6px">р</i><i style="width:6px">т</i><i style="width:6px">и</i><i style="width:6px">я</i></div>
<div class="t" style="left:519.5px;top:386px;font-size:11px;color:#505050;"><i style="width:7px">С</i><i style="width:6px">е</i><i style="width:6px">р</i><i style="width:6px">и</i><i style="width:6px">я</i></div>
<div class="t" style="left:618px;top:386px;font-size:11px;color:#505050;"><i style="width:7px">К</i><i style="width:6px">о</i><i style="width:6px">л</i><i style="width:6px">и</i><i style="width:6px">ч</i><i style="width:6px">е</i><i style="width:6px">с</i><i style="width:6px">т</i><i style="width:7px">в</i><i style="width:6px">о</i></div>
<div class="t" style="left:727px;top:386px;font-size:11px;color:#505050;"><i style="width:6px">Е</i><i style="width:6px">д</i><i style="width:3px">.</i></div>
<div class="t" style="left:773px;top:386px;font-size:11px;color:#505050;"><i style="width:7px">Н</i><i style="width:6px">е</i><i style="width:3px">&nbsp;</i><i style="width:6px">о</i><i style="width:6px">т</i><i style="width:4px">г</i><i style="width:6px">р</i><i style="width:6px">у</i><i style="width:8px">ж</i><i style="width:6px">е</i><i style="width:6px">н</i><i style="width:6px">о</i></div>
<div class="t" style="left:1060px;top:386px;font-size:11px;color:#505050;"><i style="width:7px">С</i><i style="width:5px">к</i><i style="width:6px">л</i><i style="width:6px">а</i><i style="width:6px">д</i><i style="width:3px">&nbsp;</i><i style="width:4px">(</i><i style="width:6px">р</i><i style="width:6px">е</i><i style="width:5px">з</i><i style="width:6px">е</i><i style="width:6px">р</i><i style="width:7px">в</i><i style="width:4px">)</i></div>
<div class="t" style="left:882px;top:386px;font-size:11px;color:#6b5a3a;"><i style="width:8px">М</i><i style="width:6px">о</i><i style="width:8px">ж</i><i style="width:6px">н</i><i style="width:6px">о</i><i style="width:3px">&nbsp;</i><i style="width:6px">о</i><i style="width:6px">т</i><i style="width:4px">г</i><i style="width:6px">р</i><i style="width:6px">у</i><i style="width:5px">з</i><i style="width:6px">и</i><i style="width:6px">т</i><i style="width:6px">ь</i></div>
<div class="t" style="left:882px;top:400px;font-size:11px;color:#6b5a3a;"><i style="width:4px">(</i><i style="width:7px">в</i><i style="width:6px">с</i><i style="width:6px">е</i><i style="width:4px">г</i><i style="width:6px">о</i><i style="width:4px">)</i></div>
<div class="t" style="left:983px;top:386px;font-size:11px;color:#6b5a3a;"><i style="width:8px">О</i><i style="width:6px">б</i><i style="width:6px">е</i><i style="width:6px">с</i><i style="width:6px">п</i><i style="width:6px">е</i><i style="width:6px">ч</i><i style="width:6px">е</i><i style="width:6px">н</i><i style="width:6px">о</i></div>
<div class="t" style="left:983px;top:400px;font-size:11px;color:#6b5a3a;"><i style="width:4px">(</i><i style="width:7px">в</i><i style="width:6px">с</i><i style="width:6px">е</i><i style="width:4px">г</i><i style="width:6px">о</i><i style="width:4px">)</i></div>
<div class="vl" style="left:255px;top:419px;height:277px;background:#c9c9c9;z-index:1"></div>
<div class="" style="left:20px;top:419px;width:1180px;height:277px;position:absolute;background:#fff"></div>
<div class="" style="left:20px;top:419px;width:1180px;height:19px;position:absolute;background:#fcf1cd;border-top:1px solid #fff"></div>
<div class="" style="left:20px;top:419px;width:36px;height:19px;position:absolute;background:#fbe08c"></div>
<div class="vl" style="left:255px;top:419px;height:19px;background:#f6e8c2"></div>
<div class="vl" style="left:385px;top:419px;height:19px;background:#f6e8c2"></div>
<div class="vl" style="left:515px;top:419px;height:19px;background:#f6e8c2"></div>
<div class="vl" style="left:613px;top:419px;height:19px;background:#f6e8c2"></div>
<div class="vl" style="left:722px;top:419px;height:19px;background:#f6e8c2"></div>
<div class="vl" style="left:768px;top:419px;height:19px;background:#f6e8c2"></div>
<div class="vl" style="left:878px;top:419px;height:19px;background:#f6e8c2"></div>
<div class="vl" style="left:978px;top:419px;height:19px;background:#f6e8c2"></div>
<div class="vl" style="left:1055px;top:419px;height:19px;background:#f6e8c2"></div>
<div class="hl" style="left:20px;top:438px;width:1180px;background:#e4e4e4"></div>
<div class="t" style="left:46.5px;top:424px;font-size:11px;color:#262626;"><i style="width:6px">1</i></div>
<div class="t" style="left:60.5px;top:424px;font-size:11px;color:#262626;"><i style="width:7px">В</i><i style="width:6px">а</i><i style="width:6px">р</i><i style="width:6px">о</i><i style="width:6px">ч</i><i style="width:6px">н</i><i style="width:6px">а</i><i style="width:6px">я</i><i style="width:3px">&nbsp;</i><i style="width:6px">п</i><i style="width:6px">а</i><i style="width:6px">н</i><i style="width:6px">е</i><i style="width:6px">л</i><i style="width:6px">ь</i></div>
<div class="t" style="left:259.5px;top:424px;font-size:11px;color:#262626;"><i style="width:7px">С</i><i style="width:6px">т</i><i style="width:6px">е</i><i style="width:5px">к</i><i style="width:6px">л</i><i style="width:6px">о</i><i style="width:5px">к</i><i style="width:6px">е</i><i style="width:6px">р</i><i style="width:6px">а</i><i style="width:8px">м</i><i style="width:6px">и</i><i style="width:5px">к</i><i style="width:6px">а</i></div>
<div class="t" style="left:691px;top:424px;font-size:11px;color:#262626;"><i style="width:6px">1</i><i style="width:3px">,</i><i style="width:6px">0</i><i style="width:6px">0</i><i style="width:6px">0</i></div>
<div class="t" style="left:726.5px;top:424px;font-size:11px;color:#262626;"><i style="width:8px">ш</i><i style="width:6px">т</i></div>
<div class="t" style="left:846.5px;top:424px;font-size:11px;color:#262626;"><i style="width:6px">1</i><i style="width:3px">,</i><i style="width:6px">0</i><i style="width:6px">0</i><i style="width:6px">0</i></div>
<div class="t" style="left:968.5px;top:424px;font-size:11px;color:#d0202a;"><i style="width:6px">0</i></div>
<div class="t" style="left:1024.5px;top:424px;font-size:11px;color:#2a8c2a;"><i style="width:6px">1</i><i style="width:3px">,</i><i style="width:6px">0</i><i style="width:6px">0</i><i style="width:6px">0</i></div>
<div class="t" style="left:1060px;top:424px;font-size:11px;color:#262626;"><i style="width:6px">Т</i><i style="width:6px">и</i><i style="width:8px">м</i><i style="width:6px">и</i><i style="width:6px">р</i><i style="width:6px">я</i><i style="width:5px">з</i><i style="width:6px">е</i><i style="width:7px">в</i><i style="width:6px">с</i><i style="width:5px">к</i><i style="width:6px">и</i><i style="width:6px">й</i></div>
<div class="hl" style="left:20px;top:458px;width:1180px;background:#e4e4e4"></div>
<div class="t" style="left:46.5px;top:444px;font-size:11px;color:#262626;"><i style="width:6px">2</i></div>
<div class="t" style="left:60.5px;top:444px;font-size:11px;color:#262626;"><i style="width:7px">В</i><i style="width:8px">ы</i><i style="width:6px">т</i><i style="width:6px">я</i><i style="width:8px">ж</i><i style="width:5px">к</i><i style="width:6px">а</i></div>
<div class="t" style="left:259.5px;top:444px;font-size:11px;color:#262626;"><i style="width:7px">В</i><i style="width:6px">с</i><i style="width:6px">т</i><i style="width:6px">р</i><i style="width:6px">а</i><i style="width:6px">и</i><i style="width:7px">в</i><i style="width:6px">а</i><i style="width:6px">е</i><i style="width:8px">м</i><i style="width:6px">а</i><i style="width:6px">я</i></div>
<div class="t" style="left:691px;top:444px;font-size:11px;color:#262626;"><i style="width:6px">1</i><i style="width:3px">,</i><i style="width:6px">0</i><i style="width:6px">0</i><i style="width:6px">0</i></div>
<div class="t" style="left:726.5px;top:444px;font-size:11px;color:#262626;"><i style="width:8px">ш</i><i style="width:6px">т</i></div>
<div class="t" style="left:846.5px;top:444px;font-size:11px;color:#262626;"><i style="width:6px">1</i><i style="width:3px">,</i><i style="width:6px">0</i><i style="width:6px">0</i><i style="width:6px">0</i></div>
<div class="t" style="left:968.5px;top:444px;font-size:11px;color:#d0202a;"><i style="width:6px">0</i></div>
<div class="t" style="left:1024.5px;top:444px;font-size:11px;color:#2a8c2a;"><i style="width:6px">1</i><i style="width:3px">,</i><i style="width:6px">0</i><i style="width:6px">0</i><i style="width:6px">0</i></div>
<div class="t" style="left:1060px;top:444px;font-size:11px;color:#262626;"><i style="width:6px">Т</i><i style="width:6px">и</i><i style="width:8px">м</i><i style="width:6px">и</i><i style="width:6px">р</i><i style="width:6px">я</i><i style="width:5px">з</i><i style="width:6px">е</i><i style="width:7px">в</i><i style="width:6px">с</i><i style="width:5px">к</i><i style="width:6px">и</i><i style="width:6px">й</i></div>
<div class="hl" style="left:20px;top:478px;width:1180px;background:#e4e4e4"></div>
<div class="t" style="left:46.5px;top:464px;font-size:11px;color:#262626;"><i style="width:6px">3</i></div>
<div class="t" style="left:60.5px;top:464px;font-size:11px;color:#262626;"><i style="width:8px">Д</i><i style="width:6px">у</i><i style="width:6px">х</i><i style="width:6px">о</i><i style="width:7px">в</i><i style="width:6px">о</i><i style="width:6px">й</i><i style="width:3px">&nbsp;</i><i style="width:8px">ш</i><i style="width:5px">к</i><i style="width:6px">а</i><i style="width:8px">ф</i></div>
<div class="t" style="left:259.5px;top:464px;font-size:11px;color:#262626;"><i style="width:7px">B</i><i style="width:8px">O</i><i style="width:7px">S</i><i style="width:7px">C</i><i style="width:7px">H</i></div>
<div class="t" style="left:691px;top:464px;font-size:11px;color:#262626;"><i style="width:6px">1</i><i style="width:3px">,</i><i style="width:6px">0</i><i style="width:6px">0</i><i style="width:6px">0</i></div>
<div class="t" style="left:726.5px;top:464px;font-size:11px;color:#262626;"><i style="width:8px">ш</i><i style="width:6px">т</i></div>
<div class="t" style="left:846.5px;top:464px;font-size:11px;color:#262626;"><i style="width:6px">1</i><i style="width:3px">,</i><i style="width:6px">0</i><i style="width:6px">0</i><i style="width:6px">0</i></div>
<div class="t" style="left:968.5px;top:464px;font-size:11px;color:#d0202a;"><i style="width:6px">0</i></div>
<div class="t" style="left:1024.5px;top:464px;font-size:11px;color:#2a8c2a;"><i style="width:6px">1</i><i style="width:3px">,</i><i style="width:6px">0</i><i style="width:6px">0</i><i style="width:6px">0</i></div>
<div class="t" style="left:1060px;top:464px;font-size:11px;color:#262626;"><i style="width:6px">Т</i><i style="width:6px">и</i><i style="width:8px">м</i><i style="width:6px">и</i><i style="width:6px">р</i><i style="width:6px">я</i><i style="width:5px">з</i><i style="width:6px">е</i><i style="width:7px">в</i><i style="width:6px">с</i><i style="width:5px">к</i><i style="width:6px">и</i><i style="width:6px">й</i></div>
<div class="hl" style="left:20px;top:498px;width:1180px;background:#e4e4e4"></div>
<div class="t" style="left:46.5px;top:484px;font-size:11px;color:#262626;"><i style="width:6px">4</i></div>
<div class="t" style="left:60.5px;top:484px;font-size:11px;color:#262626;"><i style="width:7px">П</i><i style="width:6px">о</i><i style="width:6px">с</i><i style="width:6px">у</i><i style="width:6px">д</i><i style="width:6px">о</i><i style="width:8px">м</i><i style="width:6px">о</i><i style="width:6px">е</i><i style="width:6px">ч</i><i style="width:6px">н</i><i style="width:6px">а</i><i style="width:6px">я</i><i style="width:3px">&nbsp;</i><i style="width:8px">м</i><i style="width:6px">а</i><i style="width:8px">ш</i><i style="width:6px">и</i><i style="width:6px">н</i><i style="width:6px">а</i></div>
<div class="t" style="left:259.5px;top:484px;font-size:11px;color:#262626;"><i style="width:7px">В</i><i style="width:6px">с</i><i style="width:6px">т</i><i style="width:6px">р</i><i style="width:6px">а</i><i style="width:6px">и</i><i style="width:7px">в</i><i style="width:6px">а</i><i style="width:6px">е</i><i style="width:8px">м</i><i style="width:6px">а</i><i style="width:6px">я</i><i style="width:3px">,</i><i style="width:3px">&nbsp;</i><i style="width:6px">4</i><i style="width:6px">5</i><i style="width:3px">&nbsp;</i><i style="width:6px">с</i><i style="width:8px">м</i></div>
<div class="t" style="left:691px;top:484px;font-size:11px;color:#262626;"><i style="width:6px">1</i><i style="width:3px">,</i><i style="width:6px">0</i><i style="width:6px">0</i><i style="width:6px">0</i></div>
<div class="t" style="left:726.5px;top:484px;font-size:11px;color:#262626;"><i style="width:8px">ш</i><i style="width:6px">т</i></div>
<div class="t" style="left:846.5px;top:484px;font-size:11px;color:#262626;"><i style="width:6px">1</i><i style="width:3px">,</i><i style="width:6px">0</i><i style="width:6px">0</i><i style="width:6px">0</i></div>
<div class="t" style="left:968.5px;top:484px;font-size:11px;color:#d0202a;"><i style="width:6px">0</i></div>
<div class="t" style="left:1024.5px;top:484px;font-size:11px;color:#2a8c2a;"><i style="width:6px">1</i><i style="width:3px">,</i><i style="width:6px">0</i><i style="width:6px">0</i><i style="width:6px">0</i></div>
<div class="t" style="left:1060px;top:484px;font-size:11px;color:#262626;"><i style="width:6px">Т</i><i style="width:6px">и</i><i style="width:8px">м</i><i style="width:6px">и</i><i style="width:6px">р</i><i style="width:6px">я</i><i style="width:5px">з</i><i style="width:6px">е</i><i style="width:7px">в</i><i style="width:6px">с</i><i style="width:5px">к</i><i style="width:6px">и</i><i style="width:6px">й</i></div>
<div class="hl" style="left:20px;top:518px;width:1180px;background:#e4e4e4"></div>
<div class="t" style="left:46.5px;top:504px;font-size:11px;color:#262626;"><i style="width:6px">5</i></div>
<div class="t" style="left:60.5px;top:504px;font-size:11px;color:#262626;"><i style="width:7px">Х</i><i style="width:6px">о</i><i style="width:6px">л</i><i style="width:6px">о</i><i style="width:6px">д</i><i style="width:6px">и</i><i style="width:6px">л</i><i style="width:6px">ь</i><i style="width:6px">н</i><i style="width:6px">и</i><i style="width:5px">к</i></div>
<div class="t" style="left:259.5px;top:504px;font-size:11px;color:#262626;"><i style="width:7px">С</i><i style="width:6px">н</i><i style="width:6px">е</i><i style="width:8px">ж</i><i style="width:6px">и</i><i style="width:6px">н</i><i style="width:5px">к</i><i style="width:6px">а</i></div>
<div class="t" style="left:691px;top:504px;font-size:11px;color:#262626;"><i style="width:6px">1</i><i style="width:3px">,</i><i style="width:6px">0</i><i style="width:6px">0</i><i style="width:6px">0</i></div>
<div class="t" style="left:726.5px;top:504px;font-size:11px;color:#262626;"><i style="width:8px">ш</i><i style="width:6px">т</i></div>
<div class="t" style="left:846.5px;top:504px;font-size:11px;color:#262626;"><i style="width:6px">1</i><i style="width:3px">,</i><i style="width:6px">0</i><i style="width:6px">0</i><i style="width:6px">0</i></div>
<div class="t" style="left:968.5px;top:504px;font-size:11px;color:#d0202a;"><i style="width:6px">0</i></div>
<div class="t" style="left:1024.5px;top:504px;font-size:11px;color:#2a8c2a;"><i style="width:6px">1</i><i style="width:3px">,</i><i style="width:6px">0</i><i style="width:6px">0</i><i style="width:6px">0</i></div>
<div class="t" style="left:1060px;top:504px;font-size:11px;color:#262626;"><i style="width:6px">Т</i><i style="width:6px">и</i><i style="width:8px">м</i><i style="width:6px">и</i><i style="width:6px">р</i><i style="width:6px">я</i><i style="width:5px">з</i><i style="width:6px">е</i><i style="width:7px">в</i><i style="width:6px">с</i><i style="width:5px">к</i><i style="width:6px">и</i><i style="width:6px">й</i></div>
<div class="hl" style="left:20px;top:538px;width:1180px;background:#e4e4e4"></div>
<div class="t" style="left:46.5px;top:524px;font-size:11px;color:#262626;"><i style="width:6px">6</i></div>
<div class="t" style="left:60.5px;top:524px;font-size:11px;color:#262626;"><i style="width:7px">С</i><i style="width:6px">т</i><i style="width:6px">о</i><i style="width:6px">л</i><i style="width:6px">е</i><i style="width:8px">ш</i><i style="width:6px">н</i><i style="width:6px">и</i><i style="width:6px">ц</i><i style="width:6px">а</i></div>
<div class="t" style="left:259.5px;top:524px;font-size:11px;color:#262626;"><i style="width:9px">И</i><i style="width:6px">с</i><i style="width:5px">к</i><i style="width:6px">у</i><i style="width:6px">с</i><i style="width:6px">с</i><i style="width:6px">т</i><i style="width:7px">в</i><i style="width:6px">е</i><i style="width:6px">н</i><i style="width:6px">н</i><i style="width:8px">ы</i><i style="width:6px">й</i><i style="width:3px">&nbsp;</i><i style="width:5px">к</i><i style="width:6px">а</i><i style="width:8px">м</i><i style="width:3px">.</i><i style="width:3px">.</i><i style="width:3px">.</i></div>
<div class="t" style="left:390px;top:524px;font-size:11px;color:#8c8c8c;"><i style="width:6px">&lt;</i><i style="width:7px">Н</i><i style="width:6px">е</i><i style="width:3px">&nbsp;</i><i style="width:6px">и</i><i style="width:6px">с</i><i style="width:6px">п</i><i style="width:6px">о</i><i style="width:6px">л</i><i style="width:6px">ь</i><i style="width:5px">з</i><i style="width:6px">у</i><i style="width:6px">е</i><i style="width:6px">т</i><i style="width:6px">с</i><i style="width:6px">я</i><i style="width:6px">&gt;</i></div>
<div class="t" style="left:691px;top:524px;font-size:11px;color:#262626;"><i style="width:6px">6</i><i style="width:3px">,</i><i style="width:6px">0</i><i style="width:6px">0</i><i style="width:6px">0</i></div>
<div class="t" style="left:726.5px;top:524px;font-size:11px;color:#262626;"><i style="width:8px">м</i><i style="width:6px">2</i></div>
<div class="t" style="left:846.5px;top:524px;font-size:11px;color:#262626;"><i style="width:6px">6</i><i style="width:3px">,</i><i style="width:6px">0</i><i style="width:6px">0</i><i style="width:6px">0</i></div>
<div class="t" style="left:968.5px;top:524px;font-size:11px;color:#d0202a;"><i style="width:6px">0</i></div>
<div class="t" style="left:1024.5px;top:524px;font-size:11px;color:#2a8c2a;"><i style="width:6px">6</i><i style="width:3px">,</i><i style="width:6px">0</i><i style="width:6px">0</i><i style="width:6px">0</i></div>
<div class="t" style="left:1060px;top:524px;font-size:11px;color:#262626;"><i style="width:6px">Т</i><i style="width:6px">и</i><i style="width:8px">м</i><i style="width:6px">и</i><i style="width:6px">р</i><i style="width:6px">я</i><i style="width:5px">з</i><i style="width:6px">е</i><i style="width:7px">в</i><i style="width:6px">с</i><i style="width:5px">к</i><i style="width:6px">и</i><i style="width:6px">й</i></div>
<div class="hl" style="left:20px;top:558px;width:1180px;background:#e4e4e4"></div>
<div class="t" style="left:46.5px;top:544px;font-size:11px;color:#262626;"><i style="width:6px">7</i></div>
<div class="t" style="left:60.5px;top:544px;font-size:11px;color:#262626;"><i style="width:12px">Ж</i><i style="width:6px">и</i><i style="width:6px">д</i><i style="width:5px">к</i><i style="width:6px">и</i><i style="width:6px">й</i><i style="width:3px">&nbsp;</i><i style="width:4px">г</i><i style="width:6px">р</i><i style="width:6px">а</i><i style="width:6px">н</i><i style="width:6px">и</i><i style="width:6px">т</i><i style="width:3px">&nbsp;</i><i style="width:4px">(</i><i style="width:6px">н</i><i style="width:6px">а</i><i style="width:6px">п</i><i style="width:6px">о</i><i style="width:6px">л</i><i style="width:6px">н</i><i style="width:6px">и</i><i style="width:6px">т</i><i style="width:6px">е</i><i style="width:6px">л</i><i style="width:6px">ь</i><i style="width:4px">)</i></div>
<div class="t" style="left:259.5px;top:544px;font-size:11px;color:#8c8c8c;"><i style="width:6px">&lt;</i><i style="width:7px">Н</i><i style="width:6px">е</i><i style="width:3px">&nbsp;</i><i style="width:6px">и</i><i style="width:6px">с</i><i style="width:6px">п</i><i style="width:6px">о</i><i style="width:6px">л</i><i style="width:6px">ь</i><i style="width:5px">з</i><i style="width:6px">у</i><i style="width:6px">е</i><i style="width:6px">т</i><i style="width:6px">с</i><i style="width:6px">я</i><i style="width:6px">&gt;</i></div>
<div class="t" style="left:390px;top:544px;font-size:11px;color:#8c8c8c;"><i style="width:6px">&lt;</i><i style="width:7px">Н</i><i style="width:6px">е</i><i style="width:3px">&nbsp;</i><i style="width:6px">и</i><i style="width:6px">с</i><i style="width:6px">п</i><i style="width:6px">о</i><i style="width:6px">л</i><i style="width:6px">ь</i><i style="width:5px">з</i><i style="width:6px">у</i><i style="width:6px">е</i><i style="width:6px">т</i><i style="width:6px">с</i><i style="width:6px">я</i><i style="width:6px">&gt;</i></div>
<div class="t" style="left:691px;top:544px;font-size:11px;color:#262626;"><i style="width:6px">6</i><i style="width:3px">,</i><i style="width:6px">0</i><i style="width:6px">0</i><i style="width:6px">0</i></div>
<div class="t" style="left:726.5px;top:544px;font-size:11px;color:#262626;"><i style="width:5px">к</i><i style="width:4px">г</i></div>
<div class="t" style="left:846.5px;top:544px;font-size:11px;color:#262626;"><i style="width:6px">6</i><i style="width:3px">,</i><i style="width:6px">0</i><i style="width:6px">0</i><i style="width:6px">0</i></div>
<div class="t" style="left:968.5px;top:544px;font-size:11px;color:#d0202a;"><i style="width:6px">0</i></div>
<div class="t" style="left:1018.5px;top:544px;font-size:11px;color:#f0a020;"><i style="width:6px">1</i><i style="width:6px">4</i><i style="width:3px">,</i><i style="width:6px">0</i><i style="width:6px">4</i><i style="width:6px">0</i></div>
<div class="t" style="left:1060px;top:544px;font-size:11px;color:#262626;"><i style="width:6px">Т</i><i style="width:6px">и</i><i style="width:8px">м</i><i style="width:6px">и</i><i style="width:6px">р</i><i style="width:6px">я</i><i style="width:5px">з</i><i style="width:6px">е</i><i style="width:7px">в</i><i style="width:6px">с</i><i style="width:5px">к</i><i style="width:6px">и</i><i style="width:6px">й</i></div>
<div class="hl" style="left:20px;top:578px;width:1180px;background:#e4e4e4"></div>
<div class="t" style="left:46.5px;top:564px;font-size:11px;color:#262626;"><i style="width:6px">8</i></div>
<div class="t" style="left:60.5px;top:564px;font-size:11px;color:#262626;"><i style="width:7px">П</i><i style="width:6px">е</i><i style="width:6px">н</i><i style="width:6px">а</i><i style="width:6px">л</i><i style="width:3px">&nbsp;</i><i style="width:6px">2</i><i style="width:4px">-</i><i style="width:6px">х</i><i style="width:3px">&nbsp;</i><i style="width:6px">д</i><i style="width:7px">в</i><i style="width:3px">.</i><i style="width:3px">&nbsp;</i><i style="width:6px">6</i><i style="width:6px">0</i><i style="width:6px">0</i><i style="width:6px">х</i><i style="width:6px">1</i><i style="width:6px">4</i><i style="width:6px">0</i><i style="width:6px">0</i><i style="width:6px">х</i><i style="width:6px">6</i><i style="width:6px">0</i><i style="width:6px">0</i></div>
<div class="t" style="left:259.5px;top:564px;font-size:11px;color:#262626;"><i style="width:8px">М</i><i style="width:8px">Д</i><i style="width:8px">Ф</i></div>
<div class="t" style="left:390px;top:564px;font-size:11px;color:#8c8c8c;"><i style="width:6px">&lt;</i><i style="width:7px">Н</i><i style="width:6px">е</i><i style="width:3px">&nbsp;</i><i style="width:6px">и</i><i style="width:6px">с</i><i style="width:6px">п</i><i style="width:6px">о</i><i style="width:6px">л</i><i style="width:6px">ь</i><i style="width:5px">з</i><i style="width:6px">у</i><i style="width:6px">е</i><i style="width:6px">т</i><i style="width:6px">с</i><i style="width:6px">я</i><i style="width:6px">&gt;</i></div>
<div class="t" style="left:691px;top:564px;font-size:11px;color:#262626;"><i style="width:6px">2</i><i style="width:3px">,</i><i style="width:6px">0</i><i style="width:6px">0</i><i style="width:6px">0</i></div>
<div class="t" style="left:726.5px;top:564px;font-size:11px;color:#262626;"><i style="width:8px">ш</i><i style="width:6px">т</i></div>
<div class="t" style="left:846.5px;top:564px;font-size:11px;color:#262626;"><i style="width:6px">2</i><i style="width:3px">,</i><i style="width:6px">0</i><i style="width:6px">0</i><i style="width:6px">0</i></div>
<div class="t" style="left:968.5px;top:564px;font-size:11px;color:#d0202a;"><i style="width:6px">0</i></div>
<div class="t" style="left:1024.5px;top:564px;font-size:11px;color:#2a8c2a;"><i style="width:6px">2</i><i style="width:3px">,</i><i style="width:6px">0</i><i style="width:6px">0</i><i style="width:6px">0</i></div>
<div class="t" style="left:1060px;top:564px;font-size:11px;color:#262626;"><i style="width:6px">Т</i><i style="width:6px">и</i><i style="width:8px">м</i><i style="width:6px">и</i><i style="width:6px">р</i><i style="width:6px">я</i><i style="width:5px">з</i><i style="width:6px">е</i><i style="width:7px">в</i><i style="width:6px">с</i><i style="width:5px">к</i><i style="width:6px">и</i><i style="width:6px">й</i></div>
<div class="hl" style="left:20px;top:598px;width:1180px;background:#e4e4e4"></div>
<div class="t" style="left:46.5px;top:584px;font-size:11px;color:#262626;"><i style="width:6px">9</i></div>
<div class="t" style="left:60.5px;top:584px;font-size:11px;color:#262626;"><i style="width:7px">С</i><i style="width:6px">т</i><i style="width:6px">о</i><i style="width:6px">л</i><i style="width:3px">&nbsp;</i><i style="width:6px">2</i><i style="width:3px">/</i><i style="width:6px">3</i><i style="width:6px">0</i><i style="width:3px">&nbsp;</i><i style="width:6px">6</i><i style="width:6px">0</i><i style="width:6px">0</i><i style="width:6px">х</i><i style="width:6px">8</i><i style="width:6px">0</i><i style="width:6px">0</i><i style="width:6px">х</i><i style="width:6px">5</i><i style="width:6px">0</i><i style="width:6px">0</i></div>
<div class="t" style="left:259.5px;top:584px;font-size:11px;color:#262626;"><i style="width:8px">М</i><i style="width:8px">Д</i><i style="width:8px">Ф</i></div>
<div class="t" style="left:390px;top:584px;font-size:11px;color:#8c8c8c;"><i style="width:6px">&lt;</i><i style="width:7px">Н</i><i style="width:6px">е</i><i style="width:3px">&nbsp;</i><i style="width:6px">и</i><i style="width:6px">с</i><i style="width:6px">п</i><i style="width:6px">о</i><i style="width:6px">л</i><i style="width:6px">ь</i><i style="width:5px">з</i><i style="width:6px">у</i><i style="width:6px">е</i><i style="width:6px">т</i><i style="width:6px">с</i><i style="width:6px">я</i><i style="width:6px">&gt;</i></div>
<div class="t" style="left:691px;top:584px;font-size:11px;color:#262626;"><i style="width:6px">1</i><i style="width:3px">,</i><i style="width:6px">0</i><i style="width:6px">0</i><i style="width:6px">0</i></div>
<div class="t" style="left:726.5px;top:584px;font-size:11px;color:#262626;"><i style="width:8px">ш</i><i style="width:6px">т</i></div>
<div class="t" style="left:846.5px;top:584px;font-size:11px;color:#262626;"><i style="width:6px">1</i><i style="width:3px">,</i><i style="width:6px">0</i><i style="width:6px">0</i><i style="width:6px">0</i></div>
<div class="t" style="left:968.5px;top:584px;font-size:11px;color:#d0202a;"><i style="width:6px">0</i></div>
<div class="t" style="left:1024.5px;top:584px;font-size:11px;color:#2a8c2a;"><i style="width:6px">1</i><i style="width:3px">,</i><i style="width:6px">0</i><i style="width:6px">0</i><i style="width:6px">0</i></div>
<div class="t" style="left:1060px;top:584px;font-size:11px;color:#262626;"><i style="width:6px">Т</i><i style="width:6px">и</i><i style="width:8px">м</i><i style="width:6px">и</i><i style="width:6px">р</i><i style="width:6px">я</i><i style="width:5px">з</i><i style="width:6px">е</i><i style="width:7px">в</i><i style="width:6px">с</i><i style="width:5px">к</i><i style="width:6px">и</i><i style="width:6px">й</i></div>
<div class="hl" style="left:20px;top:618px;width:1180px;background:#e4e4e4"></div>
<div class="t" style="left:40.5px;top:604px;font-size:11px;color:#262626;"><i style="width:6px">1</i><i style="width:6px">0</i></div>
<div class="t" style="left:60.5px;top:604px;font-size:11px;color:#262626;"><i style="width:10px">Ш</i><i style="width:5px">к</i><i style="width:6px">а</i><i style="width:8px">ф</i><i style="width:3px">&nbsp;</i><i style="width:6px">6</i><i style="width:6px">0</i><i style="width:3px">&nbsp;</i><i style="width:6px">6</i><i style="width:6px">0</i><i style="width:6px">0</i><i style="width:6px">х</i><i style="width:6px">7</i><i style="width:6px">0</i><i style="width:6px">0</i><i style="width:6px">х</i><i style="width:6px">3</i><i style="width:6px">0</i><i style="width:6px">0</i></div>
<div class="t" style="left:259.5px;top:604px;font-size:11px;color:#262626;"><i style="width:8px">М</i><i style="width:8px">Д</i><i style="width:8px">Ф</i></div>
<div class="t" style="left:390px;top:604px;font-size:11px;color:#8c8c8c;"><i style="width:6px">&lt;</i><i style="width:7px">Н</i><i style="width:6px">е</i><i style="width:3px">&nbsp;</i><i style="width:6px">и</i><i style="width:6px">с</i><i style="width:6px">п</i><i style="width:6px">о</i><i style="width:6px">л</i><i style="width:6px">ь</i><i style="width:5px">з</i><i style="width:6px">у</i><i style="width:6px">е</i><i style="width:6px">т</i><i style="width:6px">с</i><i style="width:6px">я</i><i style="width:6px">&gt;</i></div>
<div class="t" style="left:691px;top:604px;font-size:11px;color:#262626;"><i style="width:6px">6</i><i style="width:3px">,</i><i style="width:6px">0</i><i style="width:6px">0</i><i style="width:6px">0</i></div>
<div class="t" style="left:726.5px;top:604px;font-size:11px;color:#262626;"><i style="width:8px">ш</i><i style="width:6px">т</i></div>
<div class="t" style="left:846.5px;top:604px;font-size:11px;color:#262626;"><i style="width:6px">6</i><i style="width:3px">,</i><i style="width:6px">0</i><i style="width:6px">0</i><i style="width:6px">0</i></div>
<div class="t" style="left:968.5px;top:604px;font-size:11px;color:#d0202a;"><i style="width:6px">0</i></div>
<div class="t" style="left:1024.5px;top:604px;font-size:11px;color:#2a8c2a;"><i style="width:6px">6</i><i style="width:3px">,</i><i style="width:6px">0</i><i style="width:6px">0</i><i style="width:6px">0</i></div>
<div class="t" style="left:1060px;top:604px;font-size:11px;color:#262626;"><i style="width:6px">Т</i><i style="width:6px">и</i><i style="width:8px">м</i><i style="width:6px">и</i><i style="width:6px">р</i><i style="width:6px">я</i><i style="width:5px">з</i><i style="width:6px">е</i><i style="width:7px">в</i><i style="width:6px">с</i><i style="width:5px">к</i><i style="width:6px">и</i><i style="width:6px">й</i></div>
<div class="hl" style="left:20px;top:638px;width:1180px;background:#e4e4e4"></div>
<div class="t" style="left:40.5px;top:624px;font-size:11px;color:#262626;"><i style="width:6px">1</i><i style="width:6px">1</i></div>
<div class="t" style="left:60.5px;top:624px;font-size:11px;color:#262626;"><i style="width:10px">Ш</i><i style="width:5px">к</i><i style="width:6px">а</i><i style="width:8px">ф</i><i style="width:3px">&nbsp;</i><i style="width:6px">у</i><i style="width:6px">6</i><i style="width:6px">0</i><i style="width:6px">х</i><i style="width:6px">6</i><i style="width:6px">0</i><i style="width:3px">&nbsp;</i><i style="width:6px">6</i><i style="width:6px">0</i><i style="width:6px">0</i><i style="width:6px">х</i><i style="width:6px">7</i><i style="width:6px">0</i><i style="width:6px">0</i><i style="width:6px">х</i><i style="width:6px">6</i><i style="width:6px">0</i><i style="width:6px">0</i></div>
<div class="t" style="left:259.5px;top:624px;font-size:11px;color:#262626;"><i style="width:8px">М</i><i style="width:8px">Д</i><i style="width:8px">Ф</i></div>
<div class="t" style="left:390px;top:624px;font-size:11px;color:#8c8c8c;"><i style="width:6px">&lt;</i><i style="width:7px">Н</i><i style="width:6px">е</i><i style="width:3px">&nbsp;</i><i style="width:6px">и</i><i style="width:6px">с</i><i style="width:6px">п</i><i style="width:6px">о</i><i style="width:6px">л</i><i style="width:6px">ь</i><i style="width:5px">з</i><i style="width:6px">у</i><i style="width:6px">е</i><i style="width:6px">т</i><i style="width:6px">с</i><i style="width:6px">я</i><i style="width:6px">&gt;</i></div>
<div class="t" style="left:691px;top:624px;font-size:11px;color:#262626;"><i style="width:6px">7</i><i style="width:3px">,</i><i style="width:6px">0</i><i style="width:6px">0</i><i style="width:6px">0</i></div>
<div class="t" style="left:726.5px;top:624px;font-size:11px;color:#262626;"><i style="width:8px">ш</i><i style="width:6px">т</i></div>
<div class="t" style="left:846.5px;top:624px;font-size:11px;color:#262626;"><i style="width:6px">7</i><i style="width:3px">,</i><i style="width:6px">0</i><i style="width:6px">0</i><i style="width:6px">0</i></div>
<div class="t" style="left:968.5px;top:624px;font-size:11px;color:#d0202a;"><i style="width:6px">0</i></div>
<div class="t" style="left:1024.5px;top:624px;font-size:11px;color:#2a8c2a;"><i style="width:6px">7</i><i style="width:3px">,</i><i style="width:6px">0</i><i style="width:6px">0</i><i style="width:6px">0</i></div>
<div class="t" style="left:1060px;top:624px;font-size:11px;color:#262626;"><i style="width:6px">Т</i><i style="width:6px">и</i><i style="width:8px">м</i><i style="width:6px">и</i><i style="width:6px">р</i><i style="width:6px">я</i><i style="width:5px">з</i><i style="width:6px">е</i><i style="width:7px">в</i><i style="width:6px">с</i><i style="width:5px">к</i><i style="width:6px">и</i><i style="width:6px">й</i></div>
<div class="hl" style="left:20px;top:658px;width:1180px;background:#e4e4e4"></div>
<div class="t" style="left:40.5px;top:644px;font-size:11px;color:#262626;"><i style="width:6px">1</i><i style="width:6px">2</i></div>
<div class="t" style="left:60.5px;top:644px;font-size:11px;color:#262626;"><i style="width:7px">С</i><i style="width:6px">т</i><i style="width:6px">о</i><i style="width:6px">л</i><i style="width:3px">&nbsp;</i><i style="width:6px">6</i><i style="width:6px">0</i><i style="width:3px">&nbsp;</i><i style="width:6px">6</i><i style="width:6px">0</i><i style="width:6px">0</i><i style="width:6px">х</i><i style="width:6px">8</i><i style="width:6px">0</i><i style="width:6px">0</i><i style="width:6px">х</i><i style="width:6px">5</i><i style="width:6px">0</i><i style="width:6px">0</i></div>
<div class="t" style="left:259.5px;top:644px;font-size:11px;color:#262626;"><i style="width:8px">М</i><i style="width:8px">Д</i><i style="width:8px">Ф</i></div>
<div class="t" style="left:390px;top:644px;font-size:11px;color:#8c8c8c;"><i style="width:6px">&lt;</i><i style="width:7px">Н</i><i style="width:6px">е</i><i style="width:3px">&nbsp;</i><i style="width:6px">и</i><i style="width:6px">с</i><i style="width:6px">п</i><i style="width:6px">о</i><i style="width:6px">л</i><i style="width:6px">ь</i><i style="width:5px">з</i><i style="width:6px">у</i><i style="width:6px">е</i><i style="width:6px">т</i><i style="width:6px">с</i><i style="width:6px">я</i><i style="width:6px">&gt;</i></div>
<div class="t" style="left:691px;top:644px;font-size:11px;color:#262626;"><i style="width:6px">1</i><i style="width:3px">,</i><i style="width:6px">0</i><i style="width:6px">0</i><i style="width:6px">0</i></div>
<div class="t" style="left:726.5px;top:644px;font-size:11px;color:#262626;"><i style="width:8px">ш</i><i style="width:6px">т</i></div>
<div class="t" style="left:846.5px;top:644px;font-size:11px;color:#262626;"><i style="width:6px">1</i><i style="width:3px">,</i><i style="width:6px">0</i><i style="width:6px">0</i><i style="width:6px">0</i></div>
<div class="t" style="left:968.5px;top:644px;font-size:11px;color:#d0202a;"><i style="width:6px">0</i></div>
<div class="t" style="left:1024.5px;top:644px;font-size:11px;color:#2a8c2a;"><i style="width:6px">1</i><i style="width:3px">,</i><i style="width:6px">0</i><i style="width:6px">0</i><i style="width:6px">0</i></div>
<div class="t" style="left:1060px;top:644px;font-size:11px;color:#262626;"><i style="width:6px">Т</i><i style="width:6px">и</i><i style="width:8px">м</i><i style="width:6px">и</i><i style="width:6px">р</i><i style="width:6px">я</i><i style="width:5px">з</i><i style="width:6px">е</i><i style="width:7px">в</i><i style="width:6px">с</i><i style="width:5px">к</i><i style="width:6px">и</i><i style="width:6px">й</i></div>
<div class="hl" style="left:20px;top:678px;width:1180px;background:#e4e4e4"></div>
<div class="t" style="left:40.5px;top:664px;font-size:11px;color:#262626;"><i style="width:6px">1</i><i style="width:6px">3</i></div>
<div class="t" style="left:60.5px;top:664px;font-size:11px;color:#262626;"><i style="width:8px">Д</i><i style="width:6px">о</i><i style="width:6px">с</i><i style="width:6px">т</i><i style="width:6px">а</i><i style="width:7px">в</i><i style="width:5px">к</i><i style="width:6px">а</i></div>
<div class="t" style="left:259.5px;top:664px;font-size:11px;color:#262626;"><i style="width:7px">В</i><i style="width:3px">&nbsp;</i><i style="width:6px">п</i><i style="width:6px">р</i><i style="width:6px">е</i><i style="width:6px">д</i><i style="width:6px">е</i><i style="width:6px">л</i><i style="width:6px">а</i><i style="width:6px">х</i><i style="width:3px">&nbsp;</i><i style="width:8px">М</i><i style="width:7px">К</i><i style="width:8px">А</i><i style="width:8px">Д</i></div>
<div class="t" style="left:390px;top:664px;font-size:11px;color:#8c8c8c;"><i style="width:6px">&lt;</i><i style="width:7px">Н</i><i style="width:6px">е</i><i style="width:3px">&nbsp;</i><i style="width:6px">и</i><i style="width:6px">с</i><i style="width:6px">п</i><i style="width:6px">о</i><i style="width:6px">л</i><i style="width:6px">ь</i><i style="width:5px">з</i><i style="width:6px">у</i><i style="width:6px">е</i><i style="width:6px">т</i><i style="width:6px">с</i><i style="width:6px">я</i><i style="width:6px">&gt;</i></div>
<div class="t" style="left:691px;top:664px;font-size:11px;color:#262626;"><i style="width:6px">1</i><i style="width:3px">,</i><i style="width:6px">0</i><i style="width:6px">0</i><i style="width:6px">0</i></div>
<div class="t" style="left:726.5px;top:664px;font-size:11px;color:#262626;"><i style="width:8px">ш</i><i style="width:6px">т</i></div>
<div class="t" style="left:846.5px;top:664px;font-size:11px;color:#262626;"><i style="width:6px">1</i><i style="width:3px">,</i><i style="width:6px">0</i><i style="width:6px">0</i><i style="width:6px">0</i></div>
<div class="t" style="left:1060px;top:664px;font-size:11px;color:#8c8c8c;"><i style="width:6px">&lt;</i><i style="width:8px">Д</i><i style="width:6px">л</i><i style="width:6px">я</i><i style="width:3px">&nbsp;</i><i style="width:6px">т</i><i style="width:6px">о</i><i style="width:7px">в</i><i style="width:6px">а</i><i style="width:6px">р</i><i style="width:6px">о</i><i style="width:7px">в</i><i style="width:6px">&gt;</i></div>
<div class="hl" style="left:20px;top:698px;width:1180px;background:#e4e4e4"></div>
<div class="t" style="left:40.5px;top:684px;font-size:11px;color:#262626;"><i style="width:6px">1</i><i style="width:6px">4</i></div>
<div class="t" style="left:60.5px;top:684px;font-size:11px;color:#262626;"><i style="width:8px">О</i><i style="width:6px">б</i><i style="width:6px">л</i><i style="width:6px">и</i><i style="width:6px">ц</i><i style="width:6px">о</i><i style="width:7px">в</i><i style="width:5px">к</i><i style="width:6px">а</i><i style="width:3px">&nbsp;</i><i style="width:8px">ж</i><i style="width:6px">и</i><i style="width:6px">д</i><i style="width:5px">к</i><i style="width:6px">и</i><i style="width:8px">м</i><i style="width:3px">&nbsp;</i><i style="width:5px">к</i><i style="width:6px">а</i><i style="width:8px">м</i><i style="width:6px">н</i><i style="width:6px">е</i><i style="width:8px">м</i></div>
<div class="t" style="left:259.5px;top:684px;font-size:11px;color:#8c8c8c;"><i style="width:6px">&lt;</i><i style="width:7px">Н</i><i style="width:6px">е</i><i style="width:3px">&nbsp;</i><i style="width:6px">и</i><i style="width:6px">с</i><i style="width:6px">п</i><i style="width:6px">о</i><i style="width:6px">л</i><i style="width:6px">ь</i><i style="width:5px">з</i><i style="width:6px">у</i><i style="width:6px">е</i><i style="width:6px">т</i><i style="width:6px">с</i><i style="width:6px">я</i><i style="width:6px">&gt;</i></div>
<div class="t" style="left:390px;top:684px;font-size:11px;color:#8c8c8c;"><i style="width:6px">&lt;</i><i style="width:7px">Н</i><i style="width:6px">е</i><i style="width:3px">&nbsp;</i><i style="width:6px">и</i><i style="width:6px">с</i><i style="width:6px">п</i><i style="width:6px">о</i><i style="width:6px">л</i><i style="width:6px">ь</i><i style="width:5px">з</i><i style="width:6px">у</i><i style="width:6px">е</i><i style="width:6px">т</i><i style="width:6px">с</i><i style="width:6px">я</i><i style="width:6px">&gt;</i></div>
<div class="t" style="left:691px;top:684px;font-size:11px;color:#262626;"><i style="width:6px">1</i><i style="width:3px">,</i><i style="width:6px">0</i><i style="width:6px">0</i><i style="width:6px">0</i></div>
<div class="t" style="left:726.5px;top:684px;font-size:11px;color:#262626;"><i style="width:8px">ш</i><i style="width:6px">т</i></div>
<div class="t" style="left:846.5px;top:684px;font-size:11px;color:#262626;"><i style="width:6px">1</i><i style="width:3px">,</i><i style="width:6px">0</i><i style="width:6px">0</i><i style="width:6px">0</i></div>
<div class="t" style="left:1060px;top:684px;font-size:11px;color:#8c8c8c;"><i style="width:6px">&lt;</i><i style="width:8px">Д</i><i style="width:6px">л</i><i style="width:6px">я</i><i style="width:3px">&nbsp;</i><i style="width:6px">т</i><i style="width:6px">о</i><i style="width:7px">в</i><i style="width:6px">а</i><i style="width:6px">р</i><i style="width:6px">о</i><i style="width:7px">в</i><i style="width:6px">&gt;</i></div>
<svg style="position:absolute;left:0;top:0;z-index:6" width="1200" height="696"><path d="M384 346.3 L866 377.3" stroke="#e8000b" stroke-width="3.2" fill="none"/><path d="M863.5 372.8 L876.5 378.8 L863.5 382.2 Z" fill="#e8000b"/></svg>
<div class="" style="left:876px;top:370.5px;width:183px;height:50.5px;position:absolute;border:3px solid #e8000b;z-index:6"></div></div></body></html>
